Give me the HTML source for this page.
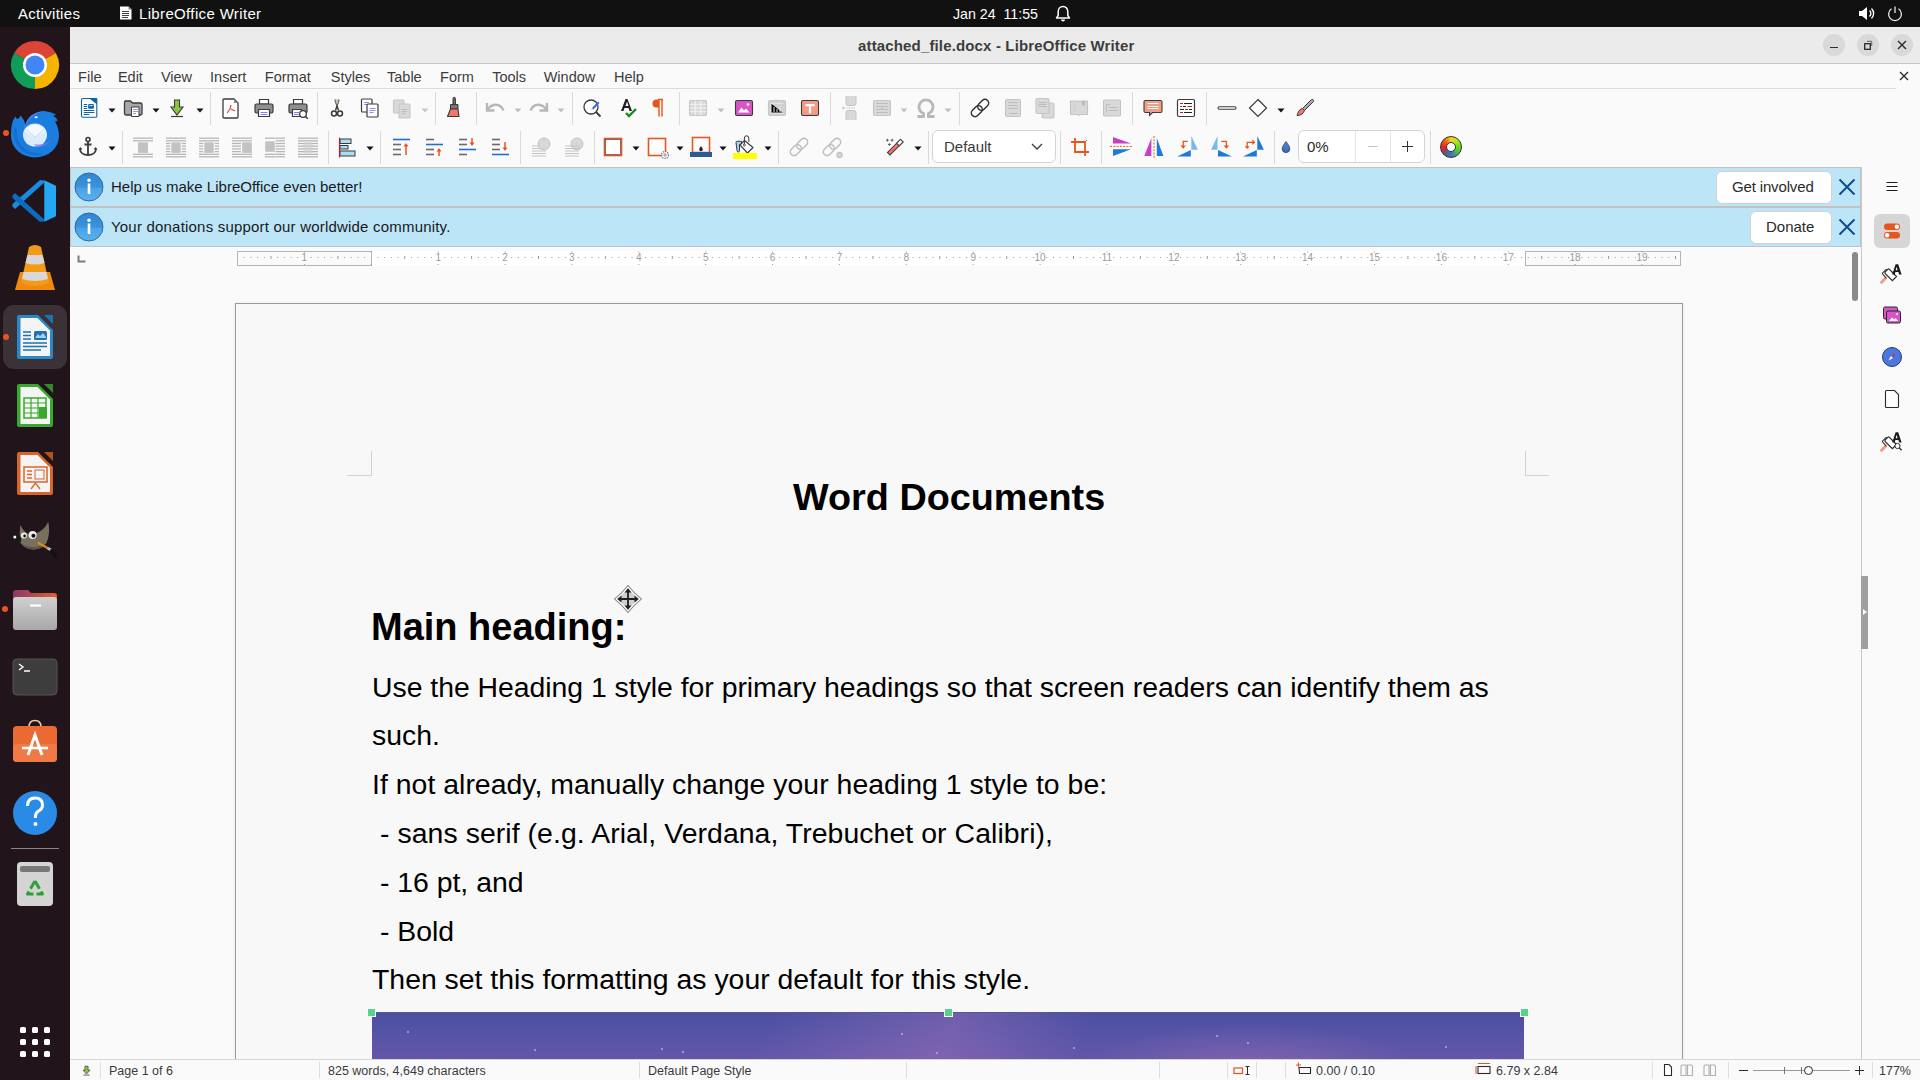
<!DOCTYPE html>
<html><head><meta charset="utf-8">
<style>
*{box-sizing:border-box;margin:0;padding:0}
html,body{width:1920px;height:1080px;overflow:hidden;background:#fafafa;font-family:"Liberation Sans",sans-serif}
.a{position:absolute}
#topbar{left:0;top:0;width:1920px;height:27px;background:#111111;color:#fff;font-size:15px}
#dock{left:0;top:27px;width:70px;height:1053px;background:#21141b}
#titlebar{left:70px;top:27px;width:1850px;height:37px;background:#ebebeb;border-bottom:1px solid #c8c8c8}
#menubar{left:70px;top:64px;width:1850px;height:24px;background:#fafafa;font-size:15px;color:#333}
#tb{left:70px;top:89px;width:1850px;height:78px;background:#fafafa}
.info{left:70px;width:1791px;height:40px;background:#bde5f8;color:#222;font-size:15px}
#ruler{left:70px;top:247px;width:1791px;height:23px;background:#fafafa}
#docarea{left:70px;top:270px;width:1791px;height:790px;background:#fafafa;overflow:hidden}
#page{left:165px;top:33px;width:1448px;height:1000px;background:#f8f8f8;border:1px solid #9a9a9a;box-shadow:0 0 3px rgba(0,0,0,0.07)}
#sidebar{left:1861px;top:167px;width:59px;height:893px;background:#fafafa;border-left:1px solid #c8c8c8}
#status{left:70px;top:1060px;width:1850px;height:20px;background:#fafafa;border-top:1px solid #d8d8d8;font-size:12px;color:#333}
.doc{font-family:"Liberation Sans",sans-serif;color:#000;white-space:pre;position:absolute}
</style></head><body>
<div id="topbar" class="a">
  <div class="a" style="left:18px;top:5px;letter-spacing:0.3px">Activities</div>
  <svg class="a" style="left:119px;top:6px" width="13" height="14" viewBox="0 0 13 14"><path d="M1 0.5h8.5l3 3v10h-11.5z" fill="#fff"/><path d="M9.5 0.5v3h3z" fill="#888"/><path d="M3 5.5h7M3 7.5h7M3 9.5h7M3 11.5h6" stroke="#444" stroke-width="1"/></svg>
  <div class="a" style="left:139px;top:5px;letter-spacing:0.35px">LibreOffice Writer</div>
  <div class="a" style="left:953px;top:5.5px;font-size:14.2px">Jan 24&nbsp; 11:55</div>
  <svg class="a" style="left:1054px;top:4px" width="18" height="19" viewBox="0 0 18 19"><path d="M9 2.5c-3 0-4.8 2.3-4.8 5.2v3.8l-1.7 2.5h13l-1.7-2.5v-3.8c0-2.9-1.8-5.2-4.8-5.2z" fill="none" stroke="#fff" stroke-width="1.5" stroke-linejoin="round"/><path d="M7 15.5a2 2 0 0 0 4 0z" fill="#fff"/></svg>
  <svg class="a" style="left:1857px;top:4.5px" width="20" height="17" viewBox="0 0 20 17"><path d="M2 6h3l5-4v13l-5-4h-3z" fill="#fff"/><path d="M12.5 5.5a4 4 0 0 1 0 6M14.5 3.5a7 7 0 0 1 0 10" fill="none" stroke="#fff" stroke-width="1.4"/></svg>
  <svg class="a" style="left:1885.5px;top:4.5px" width="18" height="18" viewBox="0 0 18 18"><path d="M5.5 3.8a6.4 6.4 0 1 0 7 0" fill="none" stroke="#eee" stroke-width="1.25"/><path d="M9 1.5v6.5" stroke="#eee" stroke-width="1.25"/></svg>
</div>
<div id="dock" class="a">
 <svg class="a" style="left:0;top:0" width="70" height="1053" viewBox="0 27 70 1053">
  <!-- chrome -->
  <g transform="translate(35,65)">
   <path d="M0 0 L20.8 -12 A24 24 0 0 0 -20.8 -12 Z" fill="#db4437"/>
   <path d="M0 0 L-20.8 -12 A24 24 0 0 0 0 24 Z" fill="#0f9d58"/>
   <path d="M0 0 L0 24 A24 24 0 0 0 20.8 -12 Z" fill="#f4b400"/>
   <path d="M0 0 L20.8 -12 L10.4 -6 Z" fill="#db4437"/>
   <circle r="12" fill="#fff"/><circle r="9.5" fill="#4285f4"/>
  </g>
  <!-- thunderbird -->
  <circle cx="6" cy="133" r="3" fill="#e95420"/>
  <g>
   <path d="M11.5 127 Q12 121 15.5 116.5 Q17.5 122 20.6 115.5 Q24.5 119.5 25.5 125 Q29 113 42 111 Q49 110.5 56 114.5 L53 116 Q57 117.5 57.5 121 L55 121.5 Q59 128 59 136 A24 21.5 0 0 1 11 136 Q11 131 11.5 127Z" fill="#1a7de0"/>
   <path d="M14 128 Q12 140 20 149 Q30 158 44 154 Q30 154 22 146 Q15 138 17 127z" fill="#1565c0" opacity="0.6"/>
   <path d="M24 129 Q27 113 42 111.5 Q33 114 28 121z" fill="#8a7ae8" opacity="0.7"/>
   <ellipse cx="36.1" cy="117.3" rx="1.6" ry="1" fill="#fff"/>
   <ellipse cx="35" cy="135" rx="12" ry="11.5" fill="#dcebfa"/>
   <path d="M24.5 131 A12 11.5 0 0 1 45.5 131 L35 137z" fill="#f4f9ff"/>
   <path d="M25 128.5 L35 137 L45 128.5" fill="none" stroke="#c4daf2" stroke-width="1"/>
   <path d="M34 144 Q44 146 50 140 Q48 145 40 147 Q36 147.5 34 144z" fill="#8a7ae8" opacity="0.8"/>
  </g>
  <!-- vscode -->
  <path d="M44.5 180.5 L56 186 L56 216 L44.5 221.5 L44.5 211 L44.5 191 Z" fill="#1f9cf0"/>
  <path d="M44.5 180.5 L47 182 L47 220 L44.5 221.5 L16.5 196 L13.5 198.5 L13.5 203.5 L16.5 206 L20.5 209.5 Z" fill="none"/>
  <path d="M44.5 180.5 L20 203 L15 199 L13.5 200.5 L13.5 202 L36.5 222 L44.5 221.5 L47 220 L47 211 L25 201 L47 191 L47 182 Z" fill="#0e7ad0" opacity="0"/>
  <path d="M46 181 L15 209 L12.5 206.5 L12.5 204 L40 180 Z" fill="#1a8ae0"/>
  <path d="M40 222 L12.5 198 L12.5 195.5 L15 193 L46 221 Z" fill="#0a6cbc"/>
  <path d="M44.5 180.5 L56 186 L56 216 L44.5 221.5 Z" fill="#24a8f2"/>
  <!-- vlc -->
  <path d="M15 290 L20 272 L50 272 L55 290 Z" fill="#f08a0c"/>
  <path d="M29 247 Q35 243 41 247 L49 283 Q35 289 21 283 Z" fill="#f39a17"/>
  <path d="M27.5 255 L42.5 255 L44.5 263 Q35 266 25.5 263 Z" fill="#d8d8d8"/>
  <path d="M23.5 272 L46.5 272 L48 279 Q35 283 22 279 Z" fill="#d8d8d8"/>
  <!-- writer highlight -->
  <rect x="3" y="305" width="64" height="64" rx="11" fill="#3a3237"/>
  <circle cx="6" cy="337" r="3" fill="#e95420"/>
  <g>
   <path d="M19 315 h19 l15 15 v27 a2 2 0 0 1 -2 2 h-32 a2 2 0 0 1 -2 -2 v-40 a2 2 0 0 1 2 -2z" fill="#2a87c8"/>
   <path d="M20.5 318 h17 l12.5 12.5 v25.5 h-29.5z" fill="#f4f4f4"/>
   <path d="M44 315 h9 v9z" fill="#1f72ad"/>
   <path d="M23 332h8M23 335.5h8M23 339h8M23 343h24M23 346.5h24M23 350h18" stroke="#1f72ad" stroke-width="1.6"/>
   <rect x="34" y="331" width="13" height="9" rx="1.5" fill="#1f72ad"/><path d="M35 338 l3-4 2 2 3-3 3 4 v1h-11z" fill="#9fd2f0"/>
  </g>
  <!-- calc -->
  <g>
   <path d="M19 384 h19 l15 15 v26 a2 2 0 0 1 -2 2 h-32 a2 2 0 0 1 -2 -2 v-39 a2 2 0 0 1 2 -2z" fill="#3aa82e"/>
   <path d="M20.5 387 h17 l12.5 12.5 v24.5 h-29.5z" fill="#f4f4f4"/>
   <path d="M44 384 h9 v9z" fill="#2f8c26"/>
   <rect x="24" y="398" width="22" height="20" fill="none" stroke="#3aa82e" stroke-width="1.5"/>
   <path d="M24 403h22M24 408h22M24 413h22M31 398v20M38 398v20" stroke="#3aa82e" stroke-width="1.2"/>
   <rect x="39" y="407" width="8" height="11" fill="#3aa82e"/>
  </g>
  <!-- impress -->
  <g>
   <path d="M19 452 h19 l15 15 v26 a2 2 0 0 1 -2 2 h-32 a2 2 0 0 1 -2 -2 v-39 a2 2 0 0 1 2 -2z" fill="#d7652a"/>
   <path d="M20.5 455 h17 l12.5 12.5 v24.5 h-29.5z" fill="#f4f4f4"/>
   <path d="M44 452 h9 v9z" fill="#b8501b"/>
   <rect x="24" y="467" width="23" height="15" fill="none" stroke="#d7652a" stroke-width="1.5"/>
   <path d="M27 471h5M27 474.5h5M27 478h5" stroke="#d7652a" stroke-width="1.5"/>
   <rect x="35" y="470" width="9" height="9" fill="none" stroke="#d7652a" stroke-width="1"/>
   <path d="M31 489 l4.5-6 4.5 6" fill="none" stroke="#d7652a" stroke-width="1.3"/>
  </g>
  <!-- gimp -->
  <g>
   <path d="M20.3 525 Q26 537 35 533.5 Q44 531 48.3 521.7 Q50.5 534 46.5 543 Q41 550 33 549.5 Q24 548.5 20.5 543 Q19 534 20.3 525 Z" fill="#77705f"/>
   <path d="M21 543 Q25 549 33 549.5 Q41 550 46.5 543 Q40 547 33 547 Q26 547 21 543z" fill="#5a5548"/>
   <ellipse cx="16.7" cy="539" rx="4.8" ry="4.2" transform="rotate(30 16.7 539)" fill="#1a1a1a"/>
   <circle cx="14.8" cy="537" r="1.5" fill="#fff"/>
   <circle cx="24" cy="535.5" r="3" fill="#eee"/><circle cx="24.6" cy="536" r="1.4" fill="#111"/>
   <circle cx="32.6" cy="535" r="4" fill="#eee"/><circle cx="33.4" cy="535.8" r="2" fill="#111"/>
   <path d="M37.8 542.8 L47.2 547.8" stroke="#e08a1e" stroke-width="2.2"/>
   <path d="M47.2 547.8 L51 550" stroke="#bbb" stroke-width="2.6"/>
   <path d="M50.5 549 Q56 551 57.5 559 Q52 556 50 551z" fill="#111"/>
  </g>
  <!-- files -->
  <circle cx="5" cy="609" r="3" fill="#e95420"/>
  <defs><linearGradient id="ftab" x1="0" y1="0" x2="1" y2="0"><stop offset="0" stop-color="#8a3a6a"/><stop offset="1" stop-color="#e0602a"/></linearGradient>
  <linearGradient id="fbody" x1="0" y1="0" x2="0" y2="1"><stop offset="0" stop-color="#d0d0d0"/><stop offset="1" stop-color="#a8a8a8"/></linearGradient></defs>
  <path d="M13 593 a3 3 0 0 1 3-3 h12 l3 3 h23 a3 3 0 0 1 3 3 v6 h-44z" fill="url(#ftab)"/>
  <rect x="13" y="597" width="44" height="33" rx="3" fill="url(#fbody)"/>
  <path d="M30 605.5h11" stroke="#fff" stroke-width="2.2"/>
  <!-- terminal -->
  <rect x="13" y="659" width="44" height="36" rx="4" fill="#3d3d3d"/>
  <rect x="13" y="659" width="44" height="36" rx="4" fill="none" stroke="#555" stroke-width="1"/>
  <path d="M19 664 l4 3 -4 3M24 671h6" fill="none" stroke="#fff" stroke-width="1.4"/>
  <!-- app center -->
  <g>
   <path d="M29 727 q0-6.5 6-6.5 q6 0 6 6.5" fill="none" stroke="#f3c9a8" stroke-width="1.6"/>
   <rect x="13" y="726" width="44" height="36" rx="4" fill="#ea6a32"/>
   <rect x="13" y="744" width="44" height="18" rx="4" fill="#f07a45"/>
   <path d="M28 755 l7-20 7 20" fill="none" stroke="#fff" stroke-width="3"/>
   <path d="M22 748h26" stroke="#fff" stroke-width="2.6"/>
  </g>
  <!-- help -->
  <circle cx="35" cy="813" r="22" fill="#2a8be6"/>
  <path d="M27.5 806 q0-8 7.5-8 q7.5 0 7.5 7 q0 4-4 6 q-3 2-3 5 v2" fill="none" stroke="#fff" stroke-width="3"/>
  <circle cx="35.5" cy="824" r="2" fill="#fff"/>
  <!-- separator -->
  <rect x="11" y="848" width="48" height="1" fill="#8a8488"/>
  <!-- trash -->
  <rect x="17" y="862" width="36" height="44" rx="4" fill="#d4d4d4"/>
  <rect x="20" y="866" width="30" height="6" rx="2" fill="#777"/>
  <path d="M35 881 L42.5 894 L27.5 894 Z" fill="none" stroke="#2fa035" stroke-width="3" stroke-dasharray="9 3" stroke-linejoin="round"/>
  <!-- app grid -->
  <g fill="#fff">
   <rect x="20" y="1027" width="6" height="6" rx="1.5"/><rect x="32" y="1027" width="6" height="6" rx="1.5"/><rect x="44" y="1027" width="6" height="6" rx="1.5"/>
   <rect x="20" y="1039" width="6" height="6" rx="1.5"/><rect x="32" y="1039" width="6" height="6" rx="1.5"/><rect x="44" y="1039" width="6" height="6" rx="1.5"/>
   <rect x="20" y="1051" width="6" height="6" rx="1.5"/><rect x="32" y="1051" width="6" height="6" rx="1.5"/><rect x="44" y="1051" width="6" height="6" rx="1.5"/>
  </g>
 </svg>
</div>
<div id="titlebar" class="a">
  <div class="a" style="left:788px;top:10px;font-weight:bold;font-size:15px;color:#3d3d3d;letter-spacing:0.15px">attached_file.docx - LibreOffice Writer</div>
  <div class="a" style="left:1753px;top:7px;width:22px;height:22px;border-radius:11px;background:#d9d9d9"></div>
  <div class="a" style="left:1760px;top:20px;width:8px;height:1.3px;background:#2a2a2a"></div>
  <div class="a" style="left:1787px;top:7px;width:22px;height:22px;border-radius:11px;background:#d9d9d9"></div>
  <svg class="a" style="left:1787px;top:7px" width="22" height="22" viewBox="0 0 22 22"><rect x="7.7" y="9.7" width="5.6" height="5.6" fill="none" stroke="#2a2a2a" stroke-width="1.3"/><path d="M10 7.3h4.7v4.7" fill="none" stroke="#555" stroke-width="0.9"/></svg>
  <div class="a" style="left:1821px;top:7px;width:22px;height:22px;border-radius:11px;background:#d9d9d9"></div>
  <svg class="a" style="left:1821px;top:7px" width="22" height="22" viewBox="0 0 22 22"><path d="M7 7l8 8M15 7l-8 8" stroke="#2a2a2a" stroke-width="1.4"/></svg>
</div>
</div>
<div id="menubar" class="a"><div class="a" style="left:0;top:24px;width:1826px;height:1px;background:#dcdcdc"></div><div class="a" style="left:8.1px;top:5px;font-size:14.5px;color:#3c3c3c">File</div><div class="a" style="left:47.9px;top:5px;font-size:14.5px;color:#3c3c3c">Edit</div><div class="a" style="left:90.9px;top:5px;font-size:14.5px;color:#3c3c3c">View</div><div class="a" style="left:140.1px;top:5px;font-size:14.5px;color:#3c3c3c">Insert</div><div class="a" style="left:194.8px;top:5px;font-size:14.5px;color:#3c3c3c">Format</div><div class="a" style="left:260.8px;top:5px;font-size:14.5px;color:#3c3c3c">Styles</div><div class="a" style="left:317.0px;top:5px;font-size:14.5px;color:#3c3c3c">Table</div><div class="a" style="left:370.1px;top:5px;font-size:14.5px;color:#3c3c3c">Form</div><div class="a" style="left:422.2px;top:5px;font-size:14.5px;color:#3c3c3c">Tools</div><div class="a" style="left:473.7px;top:5px;font-size:14.5px;color:#3c3c3c">Window</div><div class="a" style="left:544.0px;top:5px;font-size:14.5px;color:#3c3c3c">Help</div><svg class="a" style="left:1829px;top:7px" width="10" height="10" viewBox="0 0 10 10"><path d="M1 1l8 8M9 1l-8 8" stroke="#2a2a2a" stroke-width="1.3"/></svg></div>
<div id="tb" class="a"></div>
<!--TB-->
<svg class="a" style="left:77px;top:96px" width="24" height="24" viewBox="0 0 24 24"><path d="M6 2.5h13a0.8 0.8 0 0 1 0.8 0.8v17a1 1 0 0 1-1 1h-12.8a1.5 1.5 0 0 1-1.5-1.5v-15.8a1.5 1.5 0 0 1 1.5-1.5z" fill="#fff" stroke="#0a64a8" stroke-width="1.1"/><path d="M12.4 2.4h7.4v5.9z" fill="#0a64a8"/><path d="M7.2 8.5h2.6M7.2 10.5h2.6M7.2 12.5h2.6M7.2 14.5h9.7M7.2 16.5h9.7M7.2 18.5h4.7" stroke="#0a64a8" stroke-width="1.1" stroke-linecap="round"/><rect x="11.1" y="8" width="5.8" height="4.8" rx="1" fill="#0a64a8"/><path d="M12.2 11l1.3-1.6 1.3 1 1.3-1v-0.5h-3.9z" fill="#a8dcf8"/></svg>
<svg class="a" style="left:107.5px;top:107.5px" width="8" height="5" viewBox="0 0 8 5"><path d="M0.5 0.5h7l-3.5 4z" fill="#111"/></svg>
<svg class="a" style="left:121px;top:96px" width="24" height="24" viewBox="0 0 24 24"><path d="M3.5 5h6l2 2h8a1.5 1.5 0 0 1 1.5 1.5v9a1.5 1.5 0 0 1-1.5 1.5h-14.5a1.5 1.5 0 0 1-1.5-1.5v-11a1.5 1.5 0 0 1 1.5-1.5z" fill="#a8a8a8" stroke="#3b3b3b" stroke-width="1.3"/><path d="M10.5 11h7.5v9.5h-7.5z" fill="#fff" stroke="#3b3b3b" stroke-width="1"/><path d="M12 13.5h5M12 15.5h5M12 17.5h3" stroke="#8a8af0" stroke-width="0.9"/></svg>
<svg class="a" style="left:151.5px;top:107.5px" width="8" height="5" viewBox="0 0 8 5"><path d="M0.5 0.5h7l-3.5 4z" fill="#111"/></svg>
<svg class="a" style="left:165px;top:96px" width="24" height="24" viewBox="0 0 24 24"><path d="M9.5 4h5v7h3.5l-6 8-6-8h3.5z" fill="#8cc63f" stroke="#3b3b3b" stroke-width="1.1"/><path d="M6 20.5h12" stroke="#3b3b3b" stroke-width="1.2"/></svg>
<svg class="a" style="left:195.5px;top:107.5px" width="8" height="5" viewBox="0 0 8 5"><path d="M0.5 0.5h7l-3.5 4z" fill="#111"/></svg>
<div class="a" style="left:210px;top:92px;width:1px;height:33px;background:#dadada"></div>
<svg class="a" style="left:219px;top:96px" width="24" height="24" viewBox="0 0 24 24"><path d="M5 3h10l4 4v14a1 1 0 0 1-1 1h-13a1 1 0 0 1-1-1v-17a1 1 0 0 1 1-1z" fill="#fff" stroke="#3b3b3b" stroke-width="1.3"/><path d="M15 3v4h4" fill="#888"/><path d="M12 9l-1 4-3 4M12 13l4 2M11 13l-3 4" fill="none" stroke="#e23b3b" stroke-width="1.1"/></svg>
<svg class="a" style="left:252px;top:96px" width="24" height="24" viewBox="0 0 24 24"><path d="M7.5 3.5h9v4.5h-9z" fill="#fff" stroke="#3b3b3b" stroke-width="1.2"/><rect x="3" y="8" width="18" height="9" rx="1.5" fill="#8f8f8f" stroke="#3b3b3b" stroke-width="1.2"/><path d="M6.5 13.5h11v7h-11z" fill="#fff" stroke="#3b3b3b" stroke-width="1.2"/><path d="M8.5 16.5h7M8.5 18.5h7" stroke="#7f7ff0" stroke-width="1"/></svg>
<svg class="a" style="left:286px;top:96px" width="24" height="24" viewBox="0 0 24 24"><path d="M7.5 3.5h9v4.5h-9z" fill="#fff" stroke="#3b3b3b" stroke-width="1.2"/><rect x="3" y="8" width="18" height="9" rx="1.5" fill="#8f8f8f" stroke="#3b3b3b" stroke-width="1.2"/><path d="M6.5 13.5h9v7h-9z" fill="#fff" stroke="#3b3b3b" stroke-width="1.2"/><path d="M8 16.5h5M8 18.5h5" stroke="#7f7ff0" stroke-width="1"/><circle cx="17" cy="18" r="3.3" fill="#fff" stroke="#3b3b3b" stroke-width="1.3"/><path d="M19.3 20.3l2.5 2.5" stroke="#3b3b3b" stroke-width="1.5"/></svg>
<div class="a" style="left:317px;top:92px;width:1px;height:33px;background:#dadada"></div>
<svg class="a" style="left:325px;top:96px" width="24" height="24" viewBox="0 0 24 24"><path d="M10 3.5l3.5 11M14 3.5l-3.5 11" stroke="#3b3b3b" stroke-width="1.4" fill="none"/><path d="M10 3.5l2 6 2-6" fill="#c9c0a8"/><circle cx="9" cy="17.5" r="2.5" fill="none" stroke="#3b3b3b" stroke-width="1.5"/><circle cx="15" cy="17.5" r="2.5" fill="none" stroke="#3b3b3b" stroke-width="1.5"/></svg>
<svg class="a" style="left:358px;top:96px" width="24" height="24" viewBox="0 0 24 24"><path d="M4.5 3h8.5a1 1 0 0 1 1 1v11a1 1 0 0 1-1 1h-8.5a1 1 0 0 1-1-1v-11a1 1 0 0 1 1-1z" fill="#fff" stroke="#3b3b3b" stroke-width="1.2"/><path d="M6 6.5h5M6 8.5h5" stroke="#7f7ff0" stroke-width="0.9"/><path d="M10 8h9a1 1 0 0 1 1 1v11a1 1 0 0 1-1 1h-9a1 1 0 0 1-1-1v-11a1 1 0 0 1 1-1z" fill="#fff" stroke="#3b3b3b" stroke-width="1.2"/><path d="M11.5 12.5h6M11.5 14.5h6M11.5 16.5h4" stroke="#7f7ff0" stroke-width="0.9"/></svg>
<svg class="a" style="left:390px;top:96px" width="24" height="24" viewBox="0 0 24 24"><path d="M4.5 4h8.5a1 1 0 0 1 1 1v11a1 1 0 0 1-1 1h-8.5a1 1 0 0 1-1-1v-11a1 1 0 0 1 1-1z" fill="#d9d9d9" stroke="#c8c8c8" stroke-width="1.2"/><path d="M10 8h9a1 1 0 0 1 1 1v12a1 1 0 0 1-1 1h-9a1 1 0 0 1-1-1v-12a1 1 0 0 1 1-1z" fill="#d9d9d9" stroke="#c8c8c8" stroke-width="1.2"/><path d="M11.5 13.5h6M11.5 15.5h6M11.5 17.5h4" stroke="#bbb" stroke-width="0.9"/></svg>
<svg class="a" style="left:420.5px;top:107.5px" width="8" height="5" viewBox="0 0 8 5"><path d="M0.5 0.5h7l-3.5 4z" fill="#c8c8c8"/></svg>
<div class="a" style="left:435px;top:92px;width:1px;height:33px;background:#dadada"></div>
<svg class="a" style="left:442px;top:96px" width="24" height="24" viewBox="0 0 24 24"><path d="M11 2.5a1.2 1.2 0 0 1 2.4 0v6h-2.4z" fill="#666" stroke="#3b3b3b" stroke-width="1"/><path d="M8.5 8.5h7.5v4.5h-7.5z" fill="#777" stroke="#3b3b3b" stroke-width="1"/><path d="M8.5 13h7.5l1 7.5h-11.5z" fill="#f07868" stroke="#3b3b3b" stroke-width="1.1" stroke-linejoin="round"/></svg>
<div class="a" style="left:476px;top:92px;width:1px;height:33px;background:#dadada"></div>
<svg class="a" style="left:483px;top:96px" width="24" height="24" viewBox="0 0 24 24"><path d="M4 7v7.5h7.5" fill="none" stroke="#b8b8b8" stroke-width="2.4"/><path d="M4.5 14c3.5-6 12-8 16 0.5" fill="none" stroke="#b8b8b8" stroke-width="2.4"/></svg>
<svg class="a" style="left:513.5px;top:107.5px" width="8" height="5" viewBox="0 0 8 5"><path d="M0.5 0.5h7l-3.5 4z" fill="#c0c0c0"/></svg>
<svg class="a" style="left:527px;top:96px" width="24" height="24" viewBox="0 0 24 24"><path d="M20 7v7.5h-7.5" fill="none" stroke="#b8b8b8" stroke-width="2.4"/><path d="M19.5 14c-3.5-6-12-8-16 0.5" fill="none" stroke="#b8b8b8" stroke-width="2.4"/></svg>
<svg class="a" style="left:557px;top:107.5px" width="8" height="5" viewBox="0 0 8 5"><path d="M0.5 0.5h7l-3.5 4z" fill="#c0c0c0"/></svg>
<div class="a" style="left:572px;top:92px;width:1px;height:33px;background:#dadada"></div>
<svg class="a" style="left:581px;top:96px" width="24" height="24" viewBox="0 0 24 24"><circle cx="10" cy="11" r="7" fill="#fff" stroke="#3b3b3b" stroke-width="1.3"/><path d="M15 16l4.5 4.5" stroke="#3b3b3b" stroke-width="1.8"/><path d="M11 12l6-6.5 1.5 1.5-6 6.5z" fill="#2f6fe0"/><path d="M10 14l1-2 1.5 1z" fill="#e8a070"/></svg>
<svg class="a" style="left:616px;top:96px" width="24" height="24" viewBox="0 0 24 24"><path d="M5 15l4.5-12h2l4.5 12h-2.5l-1-3h-4l-1 3zM9.5 10h3l-1.5-4.5z" fill="#222"/><path d="M10 17l3 3 7-7" fill="none" stroke="#1a8a1a" stroke-width="2.4"/></svg>
<svg class="a" style="left:647px;top:96px" width="24" height="24" viewBox="0 0 24 24"><path d="M12 3.5h-2.5a4 4 0 0 0 0 8h2.5z" fill="#e8541e"/><path d="M12 3.5v17M15 3.5v17M11 3.5h5" stroke="#e8541e" stroke-width="1.4"/></svg>
<div class="a" style="left:679px;top:92px;width:1px;height:33px;background:#dadada"></div>
<svg class="a" style="left:686px;top:96px" width="24" height="24" viewBox="0 0 24 24"><rect x="3.5" y="4.5" width="17" height="15" rx="1.5" fill="#d9d9d9" stroke="#c4c4c4" stroke-width="1.1"/><path d="M3.5 8.3h17M3.5 12h17M3.5 15.7h17M9.2 4.5v15M14.8 4.5v15" stroke="#f4f4f4" stroke-width="1"/></svg>
<svg class="a" style="left:716.5px;top:107.5px" width="8" height="5" viewBox="0 0 8 5"><path d="M0.5 0.5h7l-3.5 4z" fill="#c0c0c0"/></svg>
<svg class="a" style="left:732px;top:96px" width="24" height="24" viewBox="0 0 24 24"><rect x="3.5" y="4.5" width="17" height="15" rx="1.5" fill="#d855c8" stroke="#3b3b3b" stroke-width="1.1"/><path d="M6 16.5l3.5-5 2.5 3 2-2 3.5 4z" fill="#fff"/><circle cx="16" cy="8.5" r="1.3" fill="#fff"/></svg>
<svg class="a" style="left:765px;top:96px" width="24" height="24" viewBox="0 0 24 24"><rect x="3.5" y="4.5" width="17" height="15" rx="1.5" fill="#d2d2d2" stroke="#c6c6c6" stroke-width="1.1"/><path d="M6 7.5v9.5h12M9 16v-5M12 16v-3M15 16v-6M6 7.5h12" stroke="#e6e6e6" stroke-width="1"/></svg>
<svg class="a" style="left:798px;top:96px" width="24" height="24" viewBox="0 0 24 24"><rect x="3.5" y="4.5" width="17" height="15" rx="1.5" fill="#f59a84" stroke="#3b3b3b" stroke-width="1.1"/><path d="M7.5 8h9v2.2h-3.4v7h-2.2v-7h-3.4z" fill="#fff"/></svg>
<div class="a" style="left:830px;top:92px;width:1px;height:33px;background:#dadada"></div>
<svg class="a" style="left:839px;top:96px" width="24" height="24" viewBox="0 0 24 24"><path d="M7 -0.5h10v8a2 2 0 0 1-2 2h-6a2 2 0 0 1-2-2z" fill="#d9d9d9" stroke="#c4c4c4" stroke-width="1"/><path d="M7 24.5h10v-8a2 2 0 0 0-2-2h-6a2 2 0 0 0-2 2z" fill="#d9d9d9" stroke="#c4c4c4" stroke-width="1"/><path d="M7 12h10" stroke="#c4c4c4" stroke-width="1" stroke-dasharray="1.5 1"/><path d="M3.5 10l2.5 2-2.5 2z" fill="#c4c4c4"/></svg>
<svg class="a" style="left:870px;top:96px" width="24" height="24" viewBox="0 0 24 24"><rect x="3.5" y="4.5" width="17" height="15" rx="1.5" fill="#d9d9d9" stroke="#c4c4c4" stroke-width="1.1"/><path d="M6 7.5h12M6 10.5h12M6 13.5h4M14 13.5h4M6 16.5h12" stroke="#bdbdbd" stroke-width="1"/><rect x="10.5" y="12" width="3" height="2" fill="#bdbdbd"/></svg>
<svg class="a" style="left:900px;top:107.5px" width="8" height="5" viewBox="0 0 8 5"><path d="M0.5 0.5h7l-3.5 4z" fill="#c0c0c0"/></svg>
<svg class="a" style="left:914px;top:96px" width="24" height="24" viewBox="0 0 24 24"><path d="M3.5 20.5h6v-3a7 7 0 1 1 5 0v3h6" fill="none" stroke="#b8b8b8" stroke-width="2.8"/></svg>
<svg class="a" style="left:944px;top:107.5px" width="8" height="5" viewBox="0 0 8 5"><path d="M0.5 0.5h7l-3.5 4z" fill="#c0c0c0"/></svg>
<div class="a" style="left:959px;top:92px;width:1px;height:33px;background:#dadada"></div>
<svg class="a" style="left:968px;top:96px" width="24" height="24" viewBox="0 0 24 24"><g transform="rotate(-45 12 12)"><rect x="10.3" y="8.3" width="12.4" height="7.4" rx="3.7" fill="none" stroke="#333" stroke-width="1.5"/><rect x="1.3" y="8.3" width="12.4" height="7.4" rx="3.7" fill="none" stroke="#333" stroke-width="1.5"/></g></svg>
<svg class="a" style="left:1001px;top:96px" width="24" height="24" viewBox="0 0 24 24"><rect x="4.5" y="3.5" width="15" height="17" rx="1.5" fill="#d9d9d9" stroke="#c4c4c4" stroke-width="1.1"/><path d="M7 6.5h10M7 9.5h10M7 12.5h10M8.5 17.5h8.5" stroke="#bcbcbc" stroke-width="1"/></svg>
<svg class="a" style="left:1033px;top:96px" width="24" height="24" viewBox="0 0 24 24"><rect x="9" y="7" width="12" height="15" rx="1.5" fill="#d9d9d9" stroke="#c4c4c4" stroke-width="1.1"/><rect x="3" y="2.5" width="13" height="15" rx="1.5" fill="#d9d9d9" stroke="#c4c4c4" stroke-width="1.1"/><path d="M5.5 6.5h8M5.5 8.5h8M5.5 10.5h8" stroke="#bcbcbc" stroke-width="1"/></svg>
<svg class="a" style="left:1067px;top:96px" width="24" height="24" viewBox="0 0 24 24"><path d="M3.5 5h7.5l1 1 1-1h7.5v13.5h-7.5l-1 1-1-1h-7.5z" fill="#d9d9d9" stroke="#c4c4c4" stroke-width="1.1"/><path d="M15 5v5l1.5-1.2 1.5 1.2v-5z" fill="#bcbcbc"/><path d="M6 8h3M6 10.5h3M6 13h3M6 15.5h3" stroke="#ccc" stroke-width="0.8"/></svg>
<svg class="a" style="left:1100px;top:96px" width="24" height="24" viewBox="0 0 24 24"><rect x="3.5" y="4" width="17" height="16" rx="1.5" fill="#d9d9d9" stroke="#c4c4c4" stroke-width="1.1"/><path d="M6.5 8.5h4M6.5 8.5v8M8.5 11.5h9M8.5 14.5h9" stroke="#bcbcbc" stroke-width="1"/></svg>
<div class="a" style="left:1132px;top:92px;width:1px;height:33px;background:#dadada"></div>
<svg class="a" style="left:1141px;top:96px" width="24" height="24" viewBox="0 0 24 24"><path d="M4.5 4.5h15a1.5 1.5 0 0 1 1.5 1.5v9a1.5 1.5 0 0 1-1.5 1.5h-8l-3 3v-3h-4a1.5 1.5 0 0 1-1.5-1.5v-9a1.5 1.5 0 0 1 1.5-1.5z" fill="#f59a84" stroke="#3b3b3b" stroke-width="1.1"/><path d="M6.5 7.5h11M6.5 10.5h11M6.5 12.5h11" stroke="#fff" stroke-width="1"/></svg>
<svg class="a" style="left:1174px;top:96px" width="24" height="24" viewBox="0 0 24 24"><rect x="3.5" y="3.5" width="17" height="17" rx="1.5" fill="#fff" stroke="#3b3b3b" stroke-width="1.2"/><path d="M6 7.5h3M10 7.5h8M6 10.5h2M9 10.5h3M13.5 10.5h4.5M6 13.5h4M11 13.5h3M15 13.5h3M6 16.5h3M10 16.5h8" stroke="#c61b1b" stroke-width="1.1"/><path d="M10 7.5h8M9 10.5h3M6 13.5h4M15 13.5h3M10 16.5h8" stroke="#222" stroke-width="1.1"/></svg>
<div class="a" style="left:1206px;top:92px;width:1px;height:33px;background:#dadada"></div>
<svg class="a" style="left:1215px;top:96px" width="24" height="24" viewBox="0 0 24 24"><rect x="3" y="10.8" width="18" height="2.4" rx="1.2" fill="#fff" stroke="#3b3b3b" stroke-width="1.1"/></svg>
<svg class="a" style="left:1246px;top:96px" width="24" height="24" viewBox="0 0 24 24"><path d="M12 3.5l8.5 8.5-8.5 8.5-8.5-8.5z" fill="#fff" stroke="#3b3b3b" stroke-width="1.2"/></svg>
<svg class="a" style="left:1277px;top:107.5px" width="8" height="5" viewBox="0 0 8 5"><path d="M0.5 0.5h7l-3.5 4z" fill="#111"/></svg>
<svg class="a" style="left:1292px;top:96px" width="24" height="24" viewBox="0 0 24 24"><path d="M19.5 3.5a1.5 1.5 0 0 1 2 2l-9 9-2-2z" fill="#aaa" stroke="#3b3b3b" stroke-width="1"/><path d="M10.5 12.5l2 2c-1 3-3.5 5-7.5 5 1-3 1.5-6 5.5-7z" fill="#f07868" stroke="#3b3b3b" stroke-width="1"/></svg>
<svg class="a" style="left:76px;top:135px" width="24" height="24" viewBox="0 0 24 24"><circle cx="12" cy="4.5" r="2" fill="none" stroke="#3b3b3b" stroke-width="1.6"/><path d="M12 6.5v13.5M8.5 9.5h7" stroke="#3b3b3b" stroke-width="1.8"/><path d="M4 13.5c0 4 3.5 6.5 8 6.5s8-2.5 8-6.5" fill="none" stroke="#3b3b3b" stroke-width="1.8"/><path d="M2.5 14.5l2-2.5 2 2.5M17.5 14.5l2-2.5 2 2.5" fill="#3b3b3b"/></svg>
<svg class="a" style="left:107.5px;top:146.0px" width="8" height="5" viewBox="0 0 8 5"><path d="M0.5 0.5h7l-3.5 4z" fill="#111"/></svg>
<div class="a" style="left:122px;top:131px;width:1px;height:33px;background:#dadada"></div>
<svg class="a" style="left:131px;top:135px" width="24" height="24" viewBox="0 0 24 24"><path d="M2 3.2H22" stroke="#b6b6b6" stroke-width="1.3"/><path d="M2 5.8H22" stroke="#b6b6b6" stroke-width="1.3"/><path d="M2 19.3H22" stroke="#b6b6b6" stroke-width="1.3"/><path d="M2 21.8H22" stroke="#b6b6b6" stroke-width="1.3"/><rect x="7" y="7.3" width="10" height="10.6" fill="#c2c2c2"/></svg>
<svg class="a" style="left:164px;top:135px" width="24" height="24" viewBox="0 0 24 24"><path d="M2 3.2H22" stroke="#b6b6b6" stroke-width="1.3"/><path d="M2 5.8H22" stroke="#b6b6b6" stroke-width="1.3"/><path d="M2 19.3H22" stroke="#b6b6b6" stroke-width="1.3"/><path d="M2 21.8H22" stroke="#b6b6b6" stroke-width="1.3"/><path d="M2 8.5H6.3" stroke="#b6b6b6" stroke-width="1.3"/><path d="M17.7 8.5H22" stroke="#b6b6b6" stroke-width="1.3"/><path d="M2 11.2H6.3" stroke="#b6b6b6" stroke-width="1.3"/><path d="M17.7 11.2H22" stroke="#b6b6b6" stroke-width="1.3"/><path d="M2 13.9H6.3" stroke="#b6b6b6" stroke-width="1.3"/><path d="M17.7 13.9H22" stroke="#b6b6b6" stroke-width="1.3"/><path d="M2 16.6H6.3" stroke="#b6b6b6" stroke-width="1.3"/><path d="M17.7 16.6H22" stroke="#b6b6b6" stroke-width="1.3"/><rect x="7.3" y="7.3" width="9.4" height="10.6" fill="#c2c2c2"/></svg>
<svg class="a" style="left:197px;top:135px" width="24" height="24" viewBox="0 0 24 24"><path d="M2 3.2H22" stroke="#b6b6b6" stroke-width="1.3"/><path d="M2 5.8H22" stroke="#b6b6b6" stroke-width="1.3"/><path d="M2 19.3H22" stroke="#b6b6b6" stroke-width="1.3"/><path d="M2 21.8H22" stroke="#b6b6b6" stroke-width="1.3"/><path d="M2 8.5H6.3" stroke="#b6b6b6" stroke-width="1.3"/><path d="M17.7 8.5H22" stroke="#b6b6b6" stroke-width="1.3"/><path d="M2 11.2H6.3" stroke="#b6b6b6" stroke-width="1.3"/><path d="M17.7 11.2H22" stroke="#b6b6b6" stroke-width="1.3"/><path d="M2 13.9H6.3" stroke="#b6b6b6" stroke-width="1.3"/><path d="M17.7 13.9H22" stroke="#b6b6b6" stroke-width="1.3"/><path d="M2 16.6H6.3" stroke="#b6b6b6" stroke-width="1.3"/><path d="M17.7 16.6H22" stroke="#b6b6b6" stroke-width="1.3"/><rect x="7.3" y="7.3" width="9.4" height="10.6" fill="#c2c2c2"/></svg>
<svg class="a" style="left:230px;top:135px" width="24" height="24" viewBox="0 0 24 24"><path d="M2 3.2H22" stroke="#b6b6b6" stroke-width="1.3"/><path d="M2 5.8H22" stroke="#b6b6b6" stroke-width="1.3"/><path d="M2 19.3H22" stroke="#b6b6b6" stroke-width="1.3"/><path d="M2 21.8H22" stroke="#b6b6b6" stroke-width="1.3"/><path d="M2 8.5H11" stroke="#b6b6b6" stroke-width="1.3"/><path d="M2 11.2H11" stroke="#b6b6b6" stroke-width="1.3"/><path d="M2 13.9H11" stroke="#b6b6b6" stroke-width="1.3"/><path d="M2 16.6H11" stroke="#b6b6b6" stroke-width="1.3"/><rect x="12.2" y="7.3" width="9.6" height="10.6" fill="#c2c2c2"/></svg>
<svg class="a" style="left:263px;top:135px" width="24" height="24" viewBox="0 0 24 24"><path d="M12.5 3.2H22" stroke="#b6b6b6" stroke-width="1.3"/><path d="M12.5 5.8H22" stroke="#b6b6b6" stroke-width="1.3"/><path d="M12.5 8.5H22" stroke="#b6b6b6" stroke-width="1.3"/><path d="M12.5 11.2H22" stroke="#b6b6b6" stroke-width="1.3"/><path d="M12.5 13.9H22" stroke="#b6b6b6" stroke-width="1.3"/><path d="M12.5 16.6H22" stroke="#b6b6b6" stroke-width="1.3"/><path d="M12.5 19.3H22" stroke="#b6b6b6" stroke-width="1.3"/><path d="M12.5 21.8H22" stroke="#b6b6b6" stroke-width="1.3"/><path d="M2 3.2H12.5" stroke="#b6b6b6" stroke-width="1.3"/><path d="M2 19.3H12.5" stroke="#b6b6b6" stroke-width="1.3"/><path d="M2 21.8H12.5" stroke="#b6b6b6" stroke-width="1.3"/><rect x="2.2" y="6.3" width="9.6" height="10.5" fill="#c2c2c2"/></svg>
<svg class="a" style="left:296px;top:135px" width="24" height="24" viewBox="0 0 24 24"><path d="M2 3.2H22" stroke="#b6b6b6" stroke-width="1.3"/><path d="M2 5.8H22" stroke="#b6b6b6" stroke-width="1.3"/><path d="M2 8.5H22" stroke="#b6b6b6" stroke-width="1.3"/><path d="M2 11.2H22" stroke="#b6b6b6" stroke-width="1.3"/><path d="M2 13.9H22" stroke="#b6b6b6" stroke-width="1.3"/><path d="M2 16.6H22" stroke="#b6b6b6" stroke-width="1.3"/><path d="M2 19.3H22" stroke="#b6b6b6" stroke-width="1.3"/><path d="M2 21.8H22" stroke="#b6b6b6" stroke-width="1.3"/><rect x="7.5" y="7.3" width="9" height="10.6" fill="#cfcfcf" opacity="0.6"/></svg>
<div class="a" style="left:328px;top:131px;width:1px;height:33px;background:#dadada"></div>
<svg class="a" style="left:335px;top:135px" width="24" height="24" viewBox="0 0 24 24"><path d="M4.5 2.5v20" stroke="#e0203c" stroke-width="1.2"/><rect x="5" y="4" width="11" height="4.5" fill="#aadcf4" stroke="#3b3b3b" stroke-width="1"/><rect x="5" y="10.5" width="8" height="3.5" fill="#aadcf4" stroke="#3b3b3b" stroke-width="1"/><rect x="5" y="16" width="15" height="5" fill="#aadcf4" stroke="#3b3b3b" stroke-width="1"/></svg>
<svg class="a" style="left:365.5px;top:146.0px" width="8" height="5" viewBox="0 0 8 5"><path d="M0.5 0.5h7l-3.5 4z" fill="#111"/></svg>
<div class="a" style="left:380px;top:131px;width:1px;height:33px;background:#dadada"></div>
<svg class="a" style="left:389px;top:135px" width="24" height="24" viewBox="0 0 24 24"><path d="M4 9.5h8" stroke="#6a6a6a" stroke-width="1.6"/><path d="M4 14.5h8" stroke="#6a6a6a" stroke-width="1.6"/><path d="M4 19.5h8" stroke="#6a6a6a" stroke-width="1.6"/><path d="M4 4.5h17" stroke="#1e6fd0" stroke-width="1.6"/><path d="M17 20v-9" stroke="#e8541e" stroke-width="1.5"/><path d="M14.5 11.5l2.5-3.5 2.5 3.5z" fill="#e8541e"/></svg>
<svg class="a" style="left:422px;top:135px" width="24" height="24" viewBox="0 0 24 24"><path d="M4 4.5h8" stroke="#6a6a6a" stroke-width="1.6"/><path d="M4 14.5h8" stroke="#6a6a6a" stroke-width="1.6"/><path d="M4 19.5h8" stroke="#6a6a6a" stroke-width="1.6"/><path d="M4 9.5h17" stroke="#1e6fd0" stroke-width="1.6"/><path d="M17 21v-5" stroke="#e8541e" stroke-width="1.5"/><path d="M14.5 16.5l2.5-3.5 2.5 3.5z" fill="#e8541e"/></svg>
<svg class="a" style="left:455px;top:135px" width="24" height="24" viewBox="0 0 24 24"><path d="M4 4.5h8" stroke="#6a6a6a" stroke-width="1.6"/><path d="M4 9.5h8" stroke="#6a6a6a" stroke-width="1.6"/><path d="M4 19.5h8" stroke="#6a6a6a" stroke-width="1.6"/><path d="M4 14.5h17" stroke="#1e6fd0" stroke-width="1.6"/><path d="M17 3v5" stroke="#e8541e" stroke-width="1.5"/><path d="M14.5 7.5l2.5 3.5 2.5-3.5z" fill="#e8541e"/></svg>
<svg class="a" style="left:488px;top:135px" width="24" height="24" viewBox="0 0 24 24"><path d="M4 4.5h8" stroke="#6a6a6a" stroke-width="1.6"/><path d="M4 9.5h8" stroke="#6a6a6a" stroke-width="1.6"/><path d="M4 14.5h8" stroke="#6a6a6a" stroke-width="1.6"/><path d="M4 19.5h17" stroke="#1e6fd0" stroke-width="1.6"/><path d="M17 7v6" stroke="#e8541e" stroke-width="1.5"/><path d="M14.5 12.5l2.5 3.5 2.5-3.5z" fill="#e8541e"/></svg>
<div class="a" style="left:520px;top:131px;width:1px;height:33px;background:#dadada"></div>
<svg class="a" style="left:529px;top:135px" width="24" height="24" viewBox="0 0 24 24"><path d="M3 11h9M3 13.5h9M3 16h14M3 18.5h14M3 21h14" stroke="#c4c4c4" stroke-width="1"/><circle cx="15" cy="9" r="6" fill="#d8d8d8" stroke="#c4c4c4" stroke-width="1"/></svg>
<svg class="a" style="left:562px;top:135px" width="24" height="24" viewBox="0 0 24 24"><circle cx="15" cy="9" r="6" fill="#d8d8d8" stroke="#c4c4c4" stroke-width="1"/><path d="M3 11h15M3 13.5h15M3 16h14M3 18.5h14M3 21h14" stroke="#c4c4c4" stroke-width="1"/></svg>
<div class="a" style="left:594px;top:131px;width:1px;height:33px;background:#dadada"></div>
<svg class="a" style="left:601px;top:135px" width="24" height="24" viewBox="0 0 24 24"><rect x="3.5" y="3.5" width="17" height="17" fill="#fff" stroke="#e8541e" stroke-width="1.6"/><rect x="4.6" y="4.6" width="14.8" height="14.8" fill="none" stroke="#333" stroke-width="0.6"/></svg>
<svg class="a" style="left:631.5px;top:146.0px" width="8" height="5" viewBox="0 0 8 5"><path d="M0.5 0.5h7l-3.5 4z" fill="#111"/></svg>
<svg class="a" style="left:645px;top:135px" width="24" height="24" viewBox="0 0 24 24"><rect x="3.5" y="3.5" width="17" height="17" fill="#fff" stroke="#e8541e" stroke-width="1.6"/><circle cx="20" cy="20" r="3.5" fill="#fafafa" stroke="#777" stroke-width="1.2" stroke-dasharray="1.4 0.9"/><circle cx="20" cy="20" r="1.2" fill="none" stroke="#777" stroke-width="0.8"/></svg>
<svg class="a" style="left:675.5px;top:146.0px" width="8" height="5" viewBox="0 0 8 5"><path d="M0.5 0.5h7l-3.5 4z" fill="#111"/></svg>
<svg class="a" style="left:689px;top:135px" width="24" height="24" viewBox="0 0 24 24"><rect x="3.5" y="2.5" width="17" height="15" fill="#fff" stroke="#e8541e" stroke-width="1.6"/><path d="M12 11c-1 1.5-1.8 2.5-1.8 3.5a1.8 1.8 0 0 0 3.6 0c0-1-.8-2-1.8-3.5z" fill="#222"/><rect x="1" y="17" width="22" height="5" fill="#2a5a9a"/></svg>
<svg class="a" style="left:719px;top:146.0px" width="8" height="5" viewBox="0 0 8 5"><path d="M0.5 0.5h7l-3.5 4z" fill="#111"/></svg>
<svg class="a" style="left:733px;top:135px" width="24" height="24" viewBox="0 0 24 24"><path d="M3 7.5a1.2 1.2 0 0 1 1.2-1.2h4.5v3h-2.2v6.5a1.2 1.2 0 0 1-2.4 0z" fill="#9ad8f4" stroke="#3b3b3b" stroke-width="1"/><path d="M11.5 5.5l8.5 7-5.5 5.5-7.5-8z" fill="#fff" stroke="#3b3b3b" stroke-width="1.1" stroke-linejoin="round"/><path d="M11.4 9.5v-6.5a2.2 2.2 0 0 1 4.4 0v4" fill="none" stroke="#3b3b3b" stroke-width="1"/><circle cx="11.4" cy="10" r="1" fill="#fff" stroke="#3b3b3b" stroke-width="0.9"/><rect x="0" y="18" width="24" height="6" fill="#ffff00"/></svg>
<svg class="a" style="left:763.5px;top:146.0px" width="8" height="5" viewBox="0 0 8 5"><path d="M0.5 0.5h7l-3.5 4z" fill="#111"/></svg>
<div class="a" style="left:778px;top:131px;width:1px;height:33px;background:#dadada"></div>
<svg class="a" style="left:787px;top:135px" width="24" height="24" viewBox="0 0 24 24"><g transform="rotate(-45 12 12)"><rect x="10.3" y="8.3" width="12.4" height="7.4" rx="3.7" fill="none" stroke="#bdbdbd" stroke-width="1.5"/><rect x="1.3" y="8.3" width="12.4" height="7.4" rx="3.7" fill="none" stroke="#bdbdbd" stroke-width="1.5"/></g></svg>
<svg class="a" style="left:820px;top:135px" width="24" height="24" viewBox="0 0 24 24"><g transform="rotate(-45 12 12)"><rect x="10.3" y="8.3" width="12.4" height="7.4" rx="3.7" fill="none" stroke="#bdbdbd" stroke-width="1.5"/><rect x="1.3" y="8.3" width="12.4" height="7.4" rx="3.7" fill="none" stroke="#bdbdbd" stroke-width="1.5"/></g><circle cx="19.5" cy="20" r="3.2" fill="#c4c4c4"/><path d="M18 18.5l3 3M21 18.5l-3 3" stroke="#eee" stroke-width="0.8"/></svg>
<svg class="a" style="left:883px;top:135px" width="24" height="24" viewBox="0 0 24 24"><g transform="rotate(-45 12.2 12.2)"><rect x="3" y="10.4" width="18.5" height="3.6" fill="#f07868" stroke="#3b3b3b" stroke-width="1"/><rect x="16" y="10.4" width="5.5" height="3.6" fill="#fff" stroke="#3b3b3b" stroke-width="1"/></g><path d="M4.4 3.8v2.8M3 5.2h2.8M9.1 3.8v2.8M7.7 5.2h2.8M6.4 8.1v2.8M5 9.5h2.8" stroke="#444" stroke-width="0.8"/></svg>
<svg class="a" style="left:913.5px;top:146.0px" width="8" height="5" viewBox="0 0 8 5"><path d="M0.5 0.5h7l-3.5 4z" fill="#111"/></svg>
<div class="a" style="left:928px;top:131px;width:1px;height:33px;background:#dadada"></div>
<div class="a" style="left:932px;top:130px;width:124px;height:33px;background:#fff;border:1px solid #d4d4d4;border-radius:6px"></div>
<div class="a" style="left:944px;top:138px;font-size:15px;color:#3a3a3a">Default</div>
<svg class="a" style="left:1031px;top:143px" width="12" height="7" viewBox="0 0 12 7"><path d="M1 1l5 5 5-5" fill="none" stroke="#3a3a3a" stroke-width="1.3"/></svg>
<div class="a" style="left:1060px;top:131px;width:1px;height:33px;background:#dadada"></div>
<svg class="a" style="left:1068px;top:135px" width="24" height="24" viewBox="0 0 24 24"><path d="M7 3v14h14M3 7h14v14" fill="none" stroke="#e8541e" stroke-width="1.8"/><path d="M19 5l-3 3" stroke="#e8541e" stroke-width="1"/></svg>
<div class="a" style="left:1101px;top:131px;width:1px;height:33px;background:#dadada"></div>
<svg class="a" style="left:1109px;top:135px" width="24" height="24" viewBox="0 0 24 24"><path d="M4 2L22 8.4H4z" fill="#c640c6"/><path d="M4 14.3H22L4 20.9z" fill="#1e7ad6"/><path d="M1 11.4h23" stroke="#e8541e" stroke-width="1" stroke-dasharray="2 1.3"/></svg>
<svg class="a" style="left:1142px;top:135px" width="24" height="24" viewBox="0 0 24 24"><path d="M2.3 20.9L9.4 2.9V20.9z" fill="#c640c6"/><path d="M14.8 2.9L21.4 20.9H14.8z" fill="#1e7ad6"/><path d="M12 1v23" stroke="#e8541e" stroke-width="1" stroke-dasharray="2 1.3"/></svg>
<svg class="a" style="left:1175px;top:135px" width="24" height="24" viewBox="0 0 24 24"><path d="M16.3 1.1L22.9 14.8H16.3z" fill="#7ab8ea"/><path d="M2.1 21.4L15.8 15.1V21.4z" fill="#1e7ad6"/><path d="M12.8 6.3H8.2V11" fill="none" stroke="#e8541e" stroke-width="1.3"/><path d="M5.5 10.5H10.9L8.2 13.8z" fill="#e8541e"/></svg>
<svg class="a" style="left:1210px;top:135px" width="24" height="24" viewBox="0 0 24 24"><path d="M1.1 14.8L7.5 1.1V14.8z" fill="#7ab8ea"/><path d="M8 15.1L22 21.4H8z" fill="#1e7ad6"/><path d="M11.3 6.3H16.4V11" fill="none" stroke="#e8541e" stroke-width="1.3"/><path d="M13.7 10.5H19.1L16.4 13.8z" fill="#e8541e"/></svg>
<svg class="a" style="left:1242px;top:135px" width="24" height="24" viewBox="0 0 24 24"><path d="M15.3 1.1L21.9 14.8H15.3z" fill="#1e7ad6"/><path d="M0.9 21.4L14.8 15.1V21.4z" fill="#1e7ad6"/><path d="M5.2 12V7.3H11" fill="none" stroke="#e8541e" stroke-width="1.3"/><path d="M10.3 4.5L13.5 7.3L10.3 10z" fill="#e8541e"/><path d="M2.6 11.2H7.8L5.2 14z" fill="#e8541e"/></svg>
<div class="a" style="left:1274px;top:131px;width:1px;height:33px;background:#dadada"></div>
<svg class="a" style="left:1274px;top:135px" width="24" height="24" viewBox="0 0 24 24"><defs><linearGradient id="dg" x1="0" y1="0" x2="0" y2="1"><stop offset="0" stop-color="#5a8ad0"/><stop offset="1" stop-color="#3a6ab0"/></linearGradient></defs><path d="M12 6.5c-2.2 3.2-3.8 5.2-3.8 7.3a3.8 3.8 0 0 0 7.6 0c0-2.1-1.6-4.1-3.8-7.3z" fill="url(#dg)" stroke="#2a3a5a" stroke-width="0.8"/></svg>
<div class="a" style="left:1298px;top:130px;width:127px;height:33px;background:#fff;border:1px solid #d4d4d4;border-radius:6px"></div>
<div class="a" style="left:1355px;top:131px;width:1px;height:31px;background:#e4e4e4"></div>
<div class="a" style="left:1390px;top:131px;width:1px;height:31px;background:#e4e4e4"></div>
<div class="a" style="left:1307px;top:138px;font-size:15px;color:#2a2a2a">0%</div>
<div class="a" style="left:1368px;top:146px;width:10px;height:1px;background:#c8c8c8"></div>
<div class="a" style="left:1402px;top:146px;width:11px;height:1.4px;background:#333"></div><div class="a" style="left:1406.8px;top:141px;width:1.4px;height:11px;background:#333"></div>
<div class="a" style="left:1430px;top:131px;width:1px;height:33px;background:#dadada"></div>
<div class="a" style="left:1440px;top:136px;width:22px;height:22px;border-radius:50%;background:conic-gradient(from 0deg,#f0d820,#b8e020 45deg,#60e010 90deg,#50b860 130deg,#3a78c0 175deg,#3a70b0 200deg,#904068 235deg,#f02020 270deg,#f06010 315deg,#f0d820);border:1px solid #333"></div><div class="a" style="left:1446px;top:142px;width:10px;height:10px;border-radius:50%;background:#fff;border:1px solid #333"></div>
<!--/TB-->
<div id="docarea" class="a">
  <div id="page" class="a"></div>
</div>

<div class="doc" style="left:793px;top:472px;font-size:37.8px;font-weight:bold;line-height:50px">Word Documents</div>
<div class="doc" style="left:371px;top:602px;font-size:38px;font-weight:bold;line-height:50px">Main heading:</div>
<div class="doc" style="left:372px;top:667px;font-size:28.4px;line-height:40px;letter-spacing:-0.025px">Use the Heading 1 style for primary headings so that screen readers can identify them as</div>
<div class="doc" style="left:372px;top:715px;font-size:28.4px;line-height:40px">such.</div>
<div class="doc" style="left:372px;top:764px;font-size:28.4px;line-height:40px;letter-spacing:0.03px">If not already, manually change your heading 1 style to be:</div>
<div class="doc" style="left:372px;top:813px;font-size:28.4px;line-height:40px;letter-spacing:0.07px"> - sans serif (e.g. Arial, Verdana, Trebuchet or Calibri),</div>
<div class="doc" style="left:372px;top:862px;font-size:28.4px;line-height:40px"> - 16 pt, and</div>
<div class="doc" style="left:372px;top:911px;font-size:28.4px;line-height:40px"> - Bold</div>
<div class="doc" style="left:372px;top:959px;font-size:28.4px;line-height:40px">Then set this formatting as your default for this style.</div>


<div class="a" style="left:347px;top:474.5px;width:24.5px;height:1.2px;background:#d2d2d2"></div>
<div class="a" style="left:370.5px;top:451px;width:1.2px;height:24.5px;background:#d2d2d2"></div>
<div class="a" style="left:1525px;top:474.5px;width:24px;height:1.2px;background:#d2d2d2"></div>
<div class="a" style="left:1525px;top:451px;width:1.2px;height:24.5px;background:#d2d2d2"></div>
<div class="a" style="left:372px;top:1012px;width:1152px;height:48px;background:radial-gradient(ellipse 160px 40px at 880px 50px, rgba(175,120,185,0.35), rgba(175,120,185,0)), linear-gradient(110deg, rgba(255,255,255,0) 34%, rgba(170,120,190,0.38) 50%, rgba(255,255,255,0) 62%), linear-gradient(180deg,#4b4fa2 0%,#5754a7 50%,#6556a9 100%);border-top:1px solid #555a8a"></div>
<svg class="a" style="left:372px;top:1012px" width="1152" height="48" viewBox="0 0 1152 48"><g fill="#c8c0e8" opacity="0.8"><circle cx="36" cy="20" r="1"/><circle cx="163" cy="38" r="1"/><circle cx="290" cy="37" r="1"/><circle cx="311" cy="40" r="1"/><circle cx="530" cy="22" r="1"/><circle cx="565" cy="41" r="1"/><circle cx="702" cy="36" r="1"/><circle cx="845" cy="24" r="1"/><circle cx="876" cy="31" r="1"/><circle cx="1074" cy="35" r="1"/></g></svg>
<div class="a" style="left:368px;top:1009px;width:7px;height:7px;background:#52d58a;box-shadow:0 0 0 1px #fff"></div>
<div class="a" style="left:944.5px;top:1009px;width:7px;height:7px;background:#52d58a;box-shadow:0 0 0 1px #fff"></div>
<div class="a" style="left:1521px;top:1009px;width:7px;height:7px;background:#52d58a;box-shadow:0 0 0 1px #fff"></div>
<svg class="a" style="left:613px;top:584px" width="30" height="30" viewBox="0 0 30 30"><path d="M15 0.8l6.8 7.6 7.4 6.6-7.4 6.6-6.8 7.6-6.8-7.6-7.4-6.6 7.4-6.6z" fill="#666" opacity="0.8"/><path d="M15 2.2l6.2 7 6.6 5.8-6.6 5.8-6.2 7-6.2-7-6.6-5.8 6.6-5.8z" fill="#fff"/><path d="M15 4l5.2 6 5.8 5-5.8 5-5.2 6-5.2-6-5.8-5 5.8-5z" fill="#cfcfcf"/><path d="M15 4.3l-3.4 4.2h2.5v5.6h-5.6v-2.5l-4.2 3.4 4.2 3.4v-2.5h5.6v5.6h-2.5l3.4 4.2 3.4-4.2h-2.5v-5.6h5.6v2.5l4.2-3.4-4.2-3.4v2.5h-5.6v-5.6h2.5z" fill="#1e1e1e"/></svg>
<!--MISC-->
<div class="a" style="left:70px;top:167px;width:1792px;height:80px;background:#c2c2c2"></div>
<div class="a" style="left:71px;top:168px;width:1789px;height:38px;background:#bde5f8"></div>
<div class="a" style="left:71px;top:208px;width:1789px;height:38px;background:#bde5f8"></div>
<svg class="a" style="left:74px;top:171.7px" width="30" height="30" viewBox="0 0 30 30"><defs><linearGradient id="ig" x1="0" y1="0" x2="0" y2="1"><stop offset="0" stop-color="#2f86d6"/><stop offset="0.5" stop-color="#3a93dc"/><stop offset="0.55" stop-color="#4aa3e6"/><stop offset="1" stop-color="#5ab2ee"/></linearGradient></defs><circle cx="15" cy="15" r="14" fill="url(#ig)" stroke="#3a6a9a" stroke-width="1"/><circle cx="15" cy="8.3" r="1.7" fill="#fff"/><rect x="13.7" y="11.5" width="2.6" height="10.5" fill="#fff"/></svg>
<svg class="a" style="left:74px;top:211.7px" width="30" height="30" viewBox="0 0 30 30"><defs><linearGradient id="ig" x1="0" y1="0" x2="0" y2="1"><stop offset="0" stop-color="#2f86d6"/><stop offset="0.5" stop-color="#3a93dc"/><stop offset="0.55" stop-color="#4aa3e6"/><stop offset="1" stop-color="#5ab2ee"/></linearGradient></defs><circle cx="15" cy="15" r="14" fill="url(#ig)" stroke="#3a6a9a" stroke-width="1"/><circle cx="15" cy="8.3" r="1.7" fill="#fff"/><rect x="13.7" y="11.5" width="2.6" height="10.5" fill="#fff"/></svg>
<div class="a" style="left:111px;top:178px;font-size:15px;color:#1a1a1a">Help us make LibreOffice even better!</div>
<div class="a" style="left:111px;top:218px;font-size:15px;color:#1a1a1a;letter-spacing:0.2px">Your donations support our worldwide community.</div>
<div class="a" style="left:1715.5px;top:170.5px;width:116px;height:33px;background:#fff;border:1px solid #d2d2d2;border-radius:6px"></div>
<div class="a" style="left:1732px;top:178px;font-size:15px;color:#2a2a2a;letter-spacing:-0.15px">Get involved</div>
<div class="a" style="left:1749.5px;top:210.5px;width:82px;height:33px;background:#fff;border:1px solid #d2d2d2;border-radius:6px"></div>
<div class="a" style="left:1766px;top:218px;font-size:15px;color:#2a2a2a">Donate</div>
<svg class="a" style="left:1838px;top:177.7px" width="18" height="18" viewBox="0 0 18 18"><path d="M1.5 1.5l15 15M16.5 1.5l-15 15" stroke="#0f4d8e" stroke-width="2"/></svg>
<svg class="a" style="left:1838px;top:217.8px" width="18" height="18" viewBox="0 0 18 18"><path d="M1.5 1.5l15 15M16.5 1.5l-15 15" stroke="#0f4d8e" stroke-width="2"/></svg>
<div class="a" style="left:70px;top:247px;width:1791px;height:23px;background:#fafafa"></div>
<svg class="a" style="left:77px;top:255px" width="9" height="8" viewBox="0 0 9 8"><path d="M1.5 0.5v6h7" fill="none" stroke="#7a7a7a" stroke-width="2"/></svg>
<div class="a" style="left:371px;top:251px;width:1154px;height:15px;background:#fff"></div>
<div class="a" style="left:237px;top:251px;width:135px;height:15px;border:1px solid #b4b4b4;border-right-width:1px"></div>
<div class="a" style="left:1525px;top:251px;width:156px;height:15px;border:1px solid #b4b4b4"></div>
<svg class="a" style="left:0;top:247px" width="1861" height="23" viewBox="0 247 1861 23"><rect x="243.7" y="257" width="1" height="1" fill="#9a9a9a"/><rect x="250.4" y="257" width="1" height="1" fill="#9a9a9a"/><rect x="257.1" y="257" width="1" height="1" fill="#9a9a9a"/><rect x="263.8" y="257" width="1" height="1" fill="#9a9a9a"/><rect x="270.5" y="256" width="1" height="3" fill="#9a9a9a"/><rect x="277.2" y="257" width="1" height="1" fill="#9a9a9a"/><rect x="283.9" y="257" width="1" height="1" fill="#9a9a9a"/><rect x="290.5" y="257" width="1" height="1" fill="#9a9a9a"/><rect x="297.2" y="257" width="1" height="1" fill="#9a9a9a"/><rect x="303.9" y="251.5" width="1" height="1" fill="#9a9a9a"/><rect x="303.9" y="264" width="1" height="1" fill="#9a9a9a"/><rect x="310.6" y="257" width="1" height="1" fill="#9a9a9a"/><rect x="317.3" y="257" width="1" height="1" fill="#9a9a9a"/><rect x="324.0" y="257" width="1" height="1" fill="#9a9a9a"/><rect x="330.7" y="257" width="1" height="1" fill="#9a9a9a"/><rect x="337.4" y="256" width="1" height="3" fill="#9a9a9a"/><rect x="344.0" y="257" width="1" height="1" fill="#9a9a9a"/><rect x="350.7" y="257" width="1" height="1" fill="#9a9a9a"/><rect x="357.4" y="257" width="1" height="1" fill="#9a9a9a"/><rect x="364.1" y="257" width="1" height="1" fill="#9a9a9a"/><rect x="370.8" y="251.5" width="1" height="1" fill="#9a9a9a"/><rect x="370.8" y="264" width="1" height="1" fill="#9a9a9a"/><rect x="377.5" y="257" width="1" height="1" fill="#9a9a9a"/><rect x="384.2" y="257" width="1" height="1" fill="#9a9a9a"/><rect x="390.9" y="257" width="1" height="1" fill="#9a9a9a"/><rect x="397.6" y="257" width="1" height="1" fill="#9a9a9a"/><rect x="404.2" y="256" width="1" height="3" fill="#9a9a9a"/><rect x="410.9" y="257" width="1" height="1" fill="#9a9a9a"/><rect x="417.6" y="257" width="1" height="1" fill="#9a9a9a"/><rect x="424.3" y="257" width="1" height="1" fill="#9a9a9a"/><rect x="431.0" y="257" width="1" height="1" fill="#9a9a9a"/><rect x="437.7" y="251.5" width="1" height="1" fill="#9a9a9a"/><rect x="437.7" y="264" width="1" height="1" fill="#9a9a9a"/><rect x="444.4" y="257" width="1" height="1" fill="#9a9a9a"/><rect x="451.1" y="257" width="1" height="1" fill="#9a9a9a"/><rect x="457.7" y="257" width="1" height="1" fill="#9a9a9a"/><rect x="464.4" y="257" width="1" height="1" fill="#9a9a9a"/><rect x="471.1" y="256" width="1" height="3" fill="#9a9a9a"/><rect x="477.8" y="257" width="1" height="1" fill="#9a9a9a"/><rect x="484.5" y="257" width="1" height="1" fill="#9a9a9a"/><rect x="491.2" y="257" width="1" height="1" fill="#9a9a9a"/><rect x="497.9" y="257" width="1" height="1" fill="#9a9a9a"/><rect x="504.6" y="251.5" width="1" height="1" fill="#9a9a9a"/><rect x="504.6" y="264" width="1" height="1" fill="#9a9a9a"/><rect x="511.2" y="257" width="1" height="1" fill="#9a9a9a"/><rect x="517.9" y="257" width="1" height="1" fill="#9a9a9a"/><rect x="524.6" y="257" width="1" height="1" fill="#9a9a9a"/><rect x="531.3" y="257" width="1" height="1" fill="#9a9a9a"/><rect x="538.0" y="256" width="1" height="3" fill="#9a9a9a"/><rect x="544.7" y="257" width="1" height="1" fill="#9a9a9a"/><rect x="551.4" y="257" width="1" height="1" fill="#9a9a9a"/><rect x="558.1" y="257" width="1" height="1" fill="#9a9a9a"/><rect x="564.8" y="257" width="1" height="1" fill="#9a9a9a"/><rect x="571.4" y="251.5" width="1" height="1" fill="#9a9a9a"/><rect x="571.4" y="264" width="1" height="1" fill="#9a9a9a"/><rect x="578.1" y="257" width="1" height="1" fill="#9a9a9a"/><rect x="584.8" y="257" width="1" height="1" fill="#9a9a9a"/><rect x="591.5" y="257" width="1" height="1" fill="#9a9a9a"/><rect x="598.2" y="257" width="1" height="1" fill="#9a9a9a"/><rect x="604.9" y="256" width="1" height="3" fill="#9a9a9a"/><rect x="611.6" y="257" width="1" height="1" fill="#9a9a9a"/><rect x="618.3" y="257" width="1" height="1" fill="#9a9a9a"/><rect x="624.9" y="257" width="1" height="1" fill="#9a9a9a"/><rect x="631.6" y="257" width="1" height="1" fill="#9a9a9a"/><rect x="638.3" y="251.5" width="1" height="1" fill="#9a9a9a"/><rect x="638.3" y="264" width="1" height="1" fill="#9a9a9a"/><rect x="645.0" y="257" width="1" height="1" fill="#9a9a9a"/><rect x="651.7" y="257" width="1" height="1" fill="#9a9a9a"/><rect x="658.4" y="257" width="1" height="1" fill="#9a9a9a"/><rect x="665.1" y="257" width="1" height="1" fill="#9a9a9a"/><rect x="671.8" y="256" width="1" height="3" fill="#9a9a9a"/><rect x="678.4" y="257" width="1" height="1" fill="#9a9a9a"/><rect x="685.1" y="257" width="1" height="1" fill="#9a9a9a"/><rect x="691.8" y="257" width="1" height="1" fill="#9a9a9a"/><rect x="698.5" y="257" width="1" height="1" fill="#9a9a9a"/><rect x="705.2" y="251.5" width="1" height="1" fill="#9a9a9a"/><rect x="705.2" y="264" width="1" height="1" fill="#9a9a9a"/><rect x="711.9" y="257" width="1" height="1" fill="#9a9a9a"/><rect x="718.6" y="257" width="1" height="1" fill="#9a9a9a"/><rect x="725.3" y="257" width="1" height="1" fill="#9a9a9a"/><rect x="732.0" y="257" width="1" height="1" fill="#9a9a9a"/><rect x="738.6" y="256" width="1" height="3" fill="#9a9a9a"/><rect x="745.3" y="257" width="1" height="1" fill="#9a9a9a"/><rect x="752.0" y="257" width="1" height="1" fill="#9a9a9a"/><rect x="758.7" y="257" width="1" height="1" fill="#9a9a9a"/><rect x="765.4" y="257" width="1" height="1" fill="#9a9a9a"/><rect x="772.1" y="251.5" width="1" height="1" fill="#9a9a9a"/><rect x="772.1" y="264" width="1" height="1" fill="#9a9a9a"/><rect x="778.8" y="257" width="1" height="1" fill="#9a9a9a"/><rect x="785.5" y="257" width="1" height="1" fill="#9a9a9a"/><rect x="792.1" y="257" width="1" height="1" fill="#9a9a9a"/><rect x="798.8" y="257" width="1" height="1" fill="#9a9a9a"/><rect x="805.5" y="256" width="1" height="3" fill="#9a9a9a"/><rect x="812.2" y="257" width="1" height="1" fill="#9a9a9a"/><rect x="818.9" y="257" width="1" height="1" fill="#9a9a9a"/><rect x="825.6" y="257" width="1" height="1" fill="#9a9a9a"/><rect x="832.3" y="257" width="1" height="1" fill="#9a9a9a"/><rect x="839.0" y="251.5" width="1" height="1" fill="#9a9a9a"/><rect x="839.0" y="264" width="1" height="1" fill="#9a9a9a"/><rect x="845.6" y="257" width="1" height="1" fill="#9a9a9a"/><rect x="852.3" y="257" width="1" height="1" fill="#9a9a9a"/><rect x="859.0" y="257" width="1" height="1" fill="#9a9a9a"/><rect x="865.7" y="257" width="1" height="1" fill="#9a9a9a"/><rect x="872.4" y="256" width="1" height="3" fill="#9a9a9a"/><rect x="879.1" y="257" width="1" height="1" fill="#9a9a9a"/><rect x="885.8" y="257" width="1" height="1" fill="#9a9a9a"/><rect x="892.5" y="257" width="1" height="1" fill="#9a9a9a"/><rect x="899.2" y="257" width="1" height="1" fill="#9a9a9a"/><rect x="905.8" y="251.5" width="1" height="1" fill="#9a9a9a"/><rect x="905.8" y="264" width="1" height="1" fill="#9a9a9a"/><rect x="912.5" y="257" width="1" height="1" fill="#9a9a9a"/><rect x="919.2" y="257" width="1" height="1" fill="#9a9a9a"/><rect x="925.9" y="257" width="1" height="1" fill="#9a9a9a"/><rect x="932.6" y="257" width="1" height="1" fill="#9a9a9a"/><rect x="939.3" y="256" width="1" height="3" fill="#9a9a9a"/><rect x="946.0" y="257" width="1" height="1" fill="#9a9a9a"/><rect x="952.7" y="257" width="1" height="1" fill="#9a9a9a"/><rect x="959.3" y="257" width="1" height="1" fill="#9a9a9a"/><rect x="966.0" y="257" width="1" height="1" fill="#9a9a9a"/><rect x="972.7" y="251.5" width="1" height="1" fill="#9a9a9a"/><rect x="972.7" y="264" width="1" height="1" fill="#9a9a9a"/><rect x="979.4" y="257" width="1" height="1" fill="#9a9a9a"/><rect x="986.1" y="257" width="1" height="1" fill="#9a9a9a"/><rect x="992.8" y="257" width="1" height="1" fill="#9a9a9a"/><rect x="999.5" y="257" width="1" height="1" fill="#9a9a9a"/><rect x="1006.2" y="256" width="1" height="3" fill="#9a9a9a"/><rect x="1012.8" y="257" width="1" height="1" fill="#9a9a9a"/><rect x="1019.5" y="257" width="1" height="1" fill="#9a9a9a"/><rect x="1026.2" y="257" width="1" height="1" fill="#9a9a9a"/><rect x="1032.9" y="257" width="1" height="1" fill="#9a9a9a"/><rect x="1039.6" y="251.5" width="1" height="1" fill="#9a9a9a"/><rect x="1039.6" y="264" width="1" height="1" fill="#9a9a9a"/><rect x="1046.3" y="257" width="1" height="1" fill="#9a9a9a"/><rect x="1053.0" y="257" width="1" height="1" fill="#9a9a9a"/><rect x="1059.7" y="257" width="1" height="1" fill="#9a9a9a"/><rect x="1066.4" y="257" width="1" height="1" fill="#9a9a9a"/><rect x="1073.0" y="256" width="1" height="3" fill="#9a9a9a"/><rect x="1079.7" y="257" width="1" height="1" fill="#9a9a9a"/><rect x="1086.4" y="257" width="1" height="1" fill="#9a9a9a"/><rect x="1093.1" y="257" width="1" height="1" fill="#9a9a9a"/><rect x="1099.8" y="257" width="1" height="1" fill="#9a9a9a"/><rect x="1106.5" y="251.5" width="1" height="1" fill="#9a9a9a"/><rect x="1106.5" y="264" width="1" height="1" fill="#9a9a9a"/><rect x="1113.2" y="257" width="1" height="1" fill="#9a9a9a"/><rect x="1119.9" y="257" width="1" height="1" fill="#9a9a9a"/><rect x="1126.5" y="257" width="1" height="1" fill="#9a9a9a"/><rect x="1133.2" y="257" width="1" height="1" fill="#9a9a9a"/><rect x="1139.9" y="256" width="1" height="3" fill="#9a9a9a"/><rect x="1146.6" y="257" width="1" height="1" fill="#9a9a9a"/><rect x="1153.3" y="257" width="1" height="1" fill="#9a9a9a"/><rect x="1160.0" y="257" width="1" height="1" fill="#9a9a9a"/><rect x="1166.7" y="257" width="1" height="1" fill="#9a9a9a"/><rect x="1173.4" y="251.5" width="1" height="1" fill="#9a9a9a"/><rect x="1173.4" y="264" width="1" height="1" fill="#9a9a9a"/><rect x="1180.0" y="257" width="1" height="1" fill="#9a9a9a"/><rect x="1186.7" y="257" width="1" height="1" fill="#9a9a9a"/><rect x="1193.4" y="257" width="1" height="1" fill="#9a9a9a"/><rect x="1200.1" y="257" width="1" height="1" fill="#9a9a9a"/><rect x="1206.8" y="256" width="1" height="3" fill="#9a9a9a"/><rect x="1213.5" y="257" width="1" height="1" fill="#9a9a9a"/><rect x="1220.2" y="257" width="1" height="1" fill="#9a9a9a"/><rect x="1226.9" y="257" width="1" height="1" fill="#9a9a9a"/><rect x="1233.6" y="257" width="1" height="1" fill="#9a9a9a"/><rect x="1240.2" y="251.5" width="1" height="1" fill="#9a9a9a"/><rect x="1240.2" y="264" width="1" height="1" fill="#9a9a9a"/><rect x="1246.9" y="257" width="1" height="1" fill="#9a9a9a"/><rect x="1253.6" y="257" width="1" height="1" fill="#9a9a9a"/><rect x="1260.3" y="257" width="1" height="1" fill="#9a9a9a"/><rect x="1267.0" y="257" width="1" height="1" fill="#9a9a9a"/><rect x="1273.7" y="256" width="1" height="3" fill="#9a9a9a"/><rect x="1280.4" y="257" width="1" height="1" fill="#9a9a9a"/><rect x="1287.1" y="257" width="1" height="1" fill="#9a9a9a"/><rect x="1293.7" y="257" width="1" height="1" fill="#9a9a9a"/><rect x="1300.4" y="257" width="1" height="1" fill="#9a9a9a"/><rect x="1307.1" y="251.5" width="1" height="1" fill="#9a9a9a"/><rect x="1307.1" y="264" width="1" height="1" fill="#9a9a9a"/><rect x="1313.8" y="257" width="1" height="1" fill="#9a9a9a"/><rect x="1320.5" y="257" width="1" height="1" fill="#9a9a9a"/><rect x="1327.2" y="257" width="1" height="1" fill="#9a9a9a"/><rect x="1333.9" y="257" width="1" height="1" fill="#9a9a9a"/><rect x="1340.6" y="256" width="1" height="3" fill="#9a9a9a"/><rect x="1347.2" y="257" width="1" height="1" fill="#9a9a9a"/><rect x="1353.9" y="257" width="1" height="1" fill="#9a9a9a"/><rect x="1360.6" y="257" width="1" height="1" fill="#9a9a9a"/><rect x="1367.3" y="257" width="1" height="1" fill="#9a9a9a"/><rect x="1374.0" y="251.5" width="1" height="1" fill="#9a9a9a"/><rect x="1374.0" y="264" width="1" height="1" fill="#9a9a9a"/><rect x="1380.7" y="257" width="1" height="1" fill="#9a9a9a"/><rect x="1387.4" y="257" width="1" height="1" fill="#9a9a9a"/><rect x="1394.1" y="257" width="1" height="1" fill="#9a9a9a"/><rect x="1400.8" y="257" width="1" height="1" fill="#9a9a9a"/><rect x="1407.4" y="256" width="1" height="3" fill="#9a9a9a"/><rect x="1414.1" y="257" width="1" height="1" fill="#9a9a9a"/><rect x="1420.8" y="257" width="1" height="1" fill="#9a9a9a"/><rect x="1427.5" y="257" width="1" height="1" fill="#9a9a9a"/><rect x="1434.2" y="257" width="1" height="1" fill="#9a9a9a"/><rect x="1440.9" y="251.5" width="1" height="1" fill="#9a9a9a"/><rect x="1440.9" y="264" width="1" height="1" fill="#9a9a9a"/><rect x="1447.6" y="257" width="1" height="1" fill="#9a9a9a"/><rect x="1454.3" y="257" width="1" height="1" fill="#9a9a9a"/><rect x="1460.9" y="257" width="1" height="1" fill="#9a9a9a"/><rect x="1467.6" y="257" width="1" height="1" fill="#9a9a9a"/><rect x="1474.3" y="256" width="1" height="3" fill="#9a9a9a"/><rect x="1481.0" y="257" width="1" height="1" fill="#9a9a9a"/><rect x="1487.7" y="257" width="1" height="1" fill="#9a9a9a"/><rect x="1494.4" y="257" width="1" height="1" fill="#9a9a9a"/><rect x="1501.1" y="257" width="1" height="1" fill="#9a9a9a"/><rect x="1507.8" y="251.5" width="1" height="1" fill="#9a9a9a"/><rect x="1507.8" y="264" width="1" height="1" fill="#9a9a9a"/><rect x="1514.4" y="257" width="1" height="1" fill="#9a9a9a"/><rect x="1521.1" y="257" width="1" height="1" fill="#9a9a9a"/><rect x="1527.8" y="257" width="1" height="1" fill="#9a9a9a"/><rect x="1534.5" y="257" width="1" height="1" fill="#9a9a9a"/><rect x="1541.2" y="256" width="1" height="3" fill="#9a9a9a"/><rect x="1547.9" y="257" width="1" height="1" fill="#9a9a9a"/><rect x="1554.6" y="257" width="1" height="1" fill="#9a9a9a"/><rect x="1561.3" y="257" width="1" height="1" fill="#9a9a9a"/><rect x="1568.0" y="257" width="1" height="1" fill="#9a9a9a"/><rect x="1574.6" y="251.5" width="1" height="1" fill="#9a9a9a"/><rect x="1574.6" y="264" width="1" height="1" fill="#9a9a9a"/><rect x="1581.3" y="257" width="1" height="1" fill="#9a9a9a"/><rect x="1588.0" y="257" width="1" height="1" fill="#9a9a9a"/><rect x="1594.7" y="257" width="1" height="1" fill="#9a9a9a"/><rect x="1601.4" y="257" width="1" height="1" fill="#9a9a9a"/><rect x="1608.1" y="256" width="1" height="3" fill="#9a9a9a"/><rect x="1614.8" y="257" width="1" height="1" fill="#9a9a9a"/><rect x="1621.5" y="257" width="1" height="1" fill="#9a9a9a"/><rect x="1628.1" y="257" width="1" height="1" fill="#9a9a9a"/><rect x="1634.8" y="257" width="1" height="1" fill="#9a9a9a"/><rect x="1641.5" y="251.5" width="1" height="1" fill="#9a9a9a"/><rect x="1641.5" y="264" width="1" height="1" fill="#9a9a9a"/><rect x="1648.2" y="257" width="1" height="1" fill="#9a9a9a"/><rect x="1654.9" y="257" width="1" height="1" fill="#9a9a9a"/><rect x="1661.6" y="257" width="1" height="1" fill="#9a9a9a"/><rect x="1668.3" y="257" width="1" height="1" fill="#9a9a9a"/><rect x="1675.0" y="256" width="1" height="3" fill="#9a9a9a"/></svg>
<div class="a" style="left:300.9px;top:251px;width:7px;text-align:center;font-size:10px;line-height:14px;color:#9a9a9a">1</div>
<div class="a" style="left:434.7px;top:251px;width:7px;text-align:center;font-size:10px;line-height:14px;color:#9a9a9a">1</div>
<div class="a" style="left:501.6px;top:251px;width:7px;text-align:center;font-size:10px;line-height:14px;color:#9a9a9a">2</div>
<div class="a" style="left:568.4px;top:251px;width:7px;text-align:center;font-size:10px;line-height:14px;color:#9a9a9a">3</div>
<div class="a" style="left:635.3px;top:251px;width:7px;text-align:center;font-size:10px;line-height:14px;color:#9a9a9a">4</div>
<div class="a" style="left:702.2px;top:251px;width:7px;text-align:center;font-size:10px;line-height:14px;color:#9a9a9a">5</div>
<div class="a" style="left:769.1px;top:251px;width:7px;text-align:center;font-size:10px;line-height:14px;color:#9a9a9a">6</div>
<div class="a" style="left:836.0px;top:251px;width:7px;text-align:center;font-size:10px;line-height:14px;color:#9a9a9a">7</div>
<div class="a" style="left:902.8px;top:251px;width:7px;text-align:center;font-size:10px;line-height:14px;color:#9a9a9a">8</div>
<div class="a" style="left:969.7px;top:251px;width:7px;text-align:center;font-size:10px;line-height:14px;color:#9a9a9a">9</div>
<div class="a" style="left:1033.6px;top:251px;width:13px;text-align:center;font-size:10px;line-height:14px;color:#9a9a9a">10</div>
<div class="a" style="left:1100.5px;top:251px;width:13px;text-align:center;font-size:10px;line-height:14px;color:#9a9a9a">11</div>
<div class="a" style="left:1167.4px;top:251px;width:13px;text-align:center;font-size:10px;line-height:14px;color:#9a9a9a">12</div>
<div class="a" style="left:1234.2px;top:251px;width:13px;text-align:center;font-size:10px;line-height:14px;color:#9a9a9a">13</div>
<div class="a" style="left:1301.1px;top:251px;width:13px;text-align:center;font-size:10px;line-height:14px;color:#9a9a9a">14</div>
<div class="a" style="left:1368.0px;top:251px;width:13px;text-align:center;font-size:10px;line-height:14px;color:#9a9a9a">15</div>
<div class="a" style="left:1434.9px;top:251px;width:13px;text-align:center;font-size:10px;line-height:14px;color:#9a9a9a">16</div>
<div class="a" style="left:1501.8px;top:251px;width:13px;text-align:center;font-size:10px;line-height:14px;color:#9a9a9a">17</div>
<div class="a" style="left:1568.6px;top:251px;width:13px;text-align:center;font-size:10px;line-height:14px;color:#9a9a9a">18</div>
<div class="a" style="left:1635.5px;top:251px;width:13px;text-align:center;font-size:10px;line-height:14px;color:#9a9a9a">19</div>
<div class="a" style="left:1861px;top:167px;width:1px;height:893px;background:#c8c8c8"></div>
<div class="a" style="left:1862px;top:167px;width:58px;height:893px;background:#fafafa"></div>
<svg class="a" style="left:1884px;top:180px" width="16" height="13" viewBox="0 0 16 13"><path d="M2.5 2.5h11M2.5 6.5h11M2.5 10.5h11" stroke="#1a1a1a" stroke-width="1"/></svg>
<div class="a" style="left:1874px;top:214px;width:36px;height:34px;border-radius:6px;background:#d6d6d6"></div>
<svg class="a" style="left:1880px;top:219px" width="24" height="24" viewBox="0 0 24 24"><rect x="4" y="4.5" width="16" height="6.5" rx="3.25" fill="#e8541e"/><rect x="4" y="13" width="16" height="6.5" rx="3.25" fill="#e8541e"/><circle cx="16.8" cy="7.75" r="2.2" fill="#fff"/><circle cx="7.2" cy="16.25" r="2.2" fill="#fff"/></svg>
<svg class="a" style="left:1880px;top:261px" width="24" height="24" viewBox="0 0 24 24"><path d="M1.6 21.2l4-4" stroke="#f59a84" stroke-width="3" stroke-linecap="round"/><path d="M6.3 17.2l-3.6-4a1 1 0 0 1 0-1.4l3-3a1 1 0 0 1 1.4 0" fill="none" stroke="#3a3a3a" stroke-width="1.1"/><path d="M9.2 8.2l7.3 7.3-4.1 4.1-7.3-7.3a1 1 0 0 1 0-1.2l2.9-2.9a1 1 0 0 1 1.2 0z" fill="#fff" stroke="#2a2a2a" stroke-width="1.2"/><path d="M12.2 13.6l3.4-10.4h2.6l3.4 10.4h-2.4l-0.8-2.5h-3l-0.8 2.5zM15.6 9.2h2l-1-3.4z" fill="#1a1a1a"/></svg>
<svg class="a" style="left:1880px;top:303px" width="24" height="24" viewBox="0 0 24 24"><rect x="3.5" y="4" width="14" height="12" rx="1.5" fill="#d855c8" stroke="#2a2a2a" stroke-width="1"/><rect x="6.5" y="8" width="14" height="12" rx="1.5" fill="#d855c8" stroke="#2a2a2a" stroke-width="1"/><path d="M9 18l3-3.5 2 2 1.5-1.5 2.5 3z" fill="#fff"/><circle cx="17" cy="11" r="1" fill="#fff"/></svg>
<svg class="a" style="left:1880px;top:345px" width="24" height="24" viewBox="0 0 24 24"><circle cx="12" cy="12" r="9.5" fill="#4a78e0" stroke="#2a3a6a" stroke-width="1"/><path d="M15.5 8.5l-2.5 4.5-2 -2z" fill="#e82a2a"/><path d="M8.5 15.5l2.5-4.5 2 2z" fill="#fff"/></svg>
<svg class="a" style="left:1880px;top:387px" width="24" height="24" viewBox="0 0 24 24"><path d="M6.5 3.5h8l4 4v12a1 1 0 0 1-1 1h-11a1 1 0 0 1-1-1v-15a1 1 0 0 1 1-1z" fill="#fff" stroke="#2a2a2a" stroke-width="1.1"/></svg>
<svg class="a" style="left:1880px;top:429px" width="24" height="24" viewBox="0 0 24 24"><path d="M1.6 21.2l4-4" stroke="#f59a84" stroke-width="3" stroke-linecap="round"/><path d="M6.3 17.2l-3.6-4a1 1 0 0 1 0-1.4l3-3a1 1 0 0 1 1.4 0" fill="none" stroke="#3a3a3a" stroke-width="1.1"/><path d="M9.2 8.2l7.3 7.3-4.1 4.1-7.3-7.3a1 1 0 0 1 0-1.2l2.9-2.9a1 1 0 0 1 1.2 0z" fill="#fff" stroke="#2a2a2a" stroke-width="1.2"/><path d="M12.2 13.6l3.4-10.4h2.6l3.4 10.4h-2.4l-0.8-2.5h-3l-0.8 2.5zM15.6 9.2h2l-1-3.4z" fill="#1a1a1a"/><circle cx="17.5" cy="17" r="2.6" fill="#fff" stroke="#2a2a2a" stroke-width="1"/><path d="M19.4 19l2.2 2.2" stroke="#2a2a2a" stroke-width="1.3"/></svg>
<div class="a" style="left:1861px;top:576px;width:7px;height:73px;background:#a0a0a0"></div>
<svg class="a" style="left:1862px;top:608px" width="6" height="8" viewBox="0 0 6 8"><path d="M1 1l4 3-4 3z" fill="#fff"/></svg>
<div class="a" style="left:1852px;top:252px;width:6px;height:49px;border-radius:3px;background:#8a8a8a"></div>
<div class="a" style="left:70px;top:1059px;width:1850px;height:21px;background:#fafafa;border-top:1px solid #d6d6d6"></div>
<svg class="a" style="left:81px;top:1065px" width="11" height="11" viewBox="0 0 14 14"><path d="M5 1.5h4v5h2.5l-4.5 5-4.5-5h2.5z" fill="#8cc63f" stroke="#3b3b3b" stroke-width="0.9"/><path d="M3 12.8h8" stroke="#3b3b3b" stroke-width="1"/></svg>
<div class="a" style="left:100px;top:1062px;width:1px;height:16px;background:#dedede"></div>
<div class="a" style="left:319px;top:1062px;width:1px;height:16px;background:#dedede"></div>
<div class="a" style="left:639px;top:1062px;width:1px;height:16px;background:#dedede"></div>
<div class="a" style="left:906px;top:1062px;width:1px;height:16px;background:#dedede"></div>
<div class="a" style="left:1159px;top:1062px;width:1px;height:16px;background:#dedede"></div>
<div class="a" style="left:1227px;top:1062px;width:1px;height:16px;background:#dedede"></div>
<div class="a" style="left:1256px;top:1062px;width:1px;height:16px;background:#dedede"></div>
<div class="a" style="left:1285px;top:1062px;width:1px;height:16px;background:#dedede"></div>
<div class="a" style="left:1652px;top:1062px;width:1px;height:16px;background:#dedede"></div>
<div class="a" style="left:1728px;top:1062px;width:1px;height:16px;background:#dedede"></div>
<div class="a" style="left:1872px;top:1062px;width:1px;height:16px;background:#dedede"></div>
<div class="a" style="left:109px;font-size:12.5px;color:#3a3a3a;top:1063.5px">Page 1 of 6</div>
<div class="a" style="left:328px;font-size:12.5px;color:#3a3a3a;top:1063.5px">825 words, 4,649 characters</div>
<div class="a" style="left:648px;font-size:12.5px;color:#3a3a3a;top:1063.5px">Default Page Style</div>
<svg class="a" style="left:1232px;top:1063px" width="20" height="14" viewBox="0 0 20 14"><rect x="2" y="5" width="8.5" height="5.5" fill="none" stroke="#e8541e" stroke-width="1.2"/><path d="M13.5 3.5h4M15.5 3.5v8M13.5 11.5h4" stroke="#2a2a2a" stroke-width="1"/></svg>
<svg class="a" style="left:1295px;top:1062px" width="18" height="14" viewBox="0 0 18 14"><path d="M4 5.5h11.5v6h-11z" fill="none" stroke="#2a2a2a" stroke-width="1.1"/><path d="M1 3h5M3.5 0.5v5" stroke="#e8541e" stroke-width="1.1"/></svg>
<div class="a" style="left:1316px;font-size:12.5px;color:#3a3a3a;top:1063.5px">0.00 / 0.10</div>
<svg class="a" style="left:1474px;top:1062px" width="18" height="14" viewBox="0 0 18 14"><rect x="4" y="4.5" width="12" height="7" fill="none" stroke="#2a2a2a" stroke-width="1.1"/><path d="M4 1.5h12M2 4v8" stroke="#e8541e" stroke-width="1.1"/></svg>
<div class="a" style="left:1496px;font-size:12.5px;color:#3a3a3a;top:1063.5px">6.79 x 2.84</div>
<svg class="a" style="left:1662px;top:1063px" width="60" height="14" viewBox="0 0 60 14"><path d="M2.5 1.5h4.5l2.5 2.5v8.5h-7z" fill="#fff" stroke="#2a2a2a" stroke-width="1.1"/><path d="M20 2h4v10.5h-5v-9.5zM25.5 2h4l1 1.5v9h-5z" fill="none" stroke="#b0b0b0" stroke-width="1.1"/><path d="M43 2h4v10.5h-5v-9.5zM48.5 2h4l1 1.5v9h-5z" fill="none" stroke="#b0b0b0" stroke-width="1.1"/></svg>
<div class="a" style="left:1739px;top:1069.5px;width:9px;height:1.6px;background:#2a2a2a"></div>
<div class="a" style="left:1753px;top:1070px;width:97px;height:1px;background:#9a9a9a"></div>
<div class="a" style="left:1784px;top:1067px;width:1px;height:7px;background:#777"></div>
<div class="a" style="left:1801px;top:1067px;width:1px;height:7px;background:#777"></div>
<div class="a" style="left:1803.5px;top:1065.5px;width:9px;height:9px;border-radius:50%;background:#fafafa;border:1.3px solid #2a2a2a"></div>
<div class="a" style="left:1855px;top:1069.5px;width:9px;height:1.6px;background:#2a2a2a"></div><div class="a" style="left:1858.7px;top:1065.8px;width:1.6px;height:9px;background:#2a2a2a"></div>
<div class="a" style="left:1879px;font-size:12.5px;color:#3a3a3a;top:1063.5px">177%</div>
<!--/MISC-->
</body></html>
